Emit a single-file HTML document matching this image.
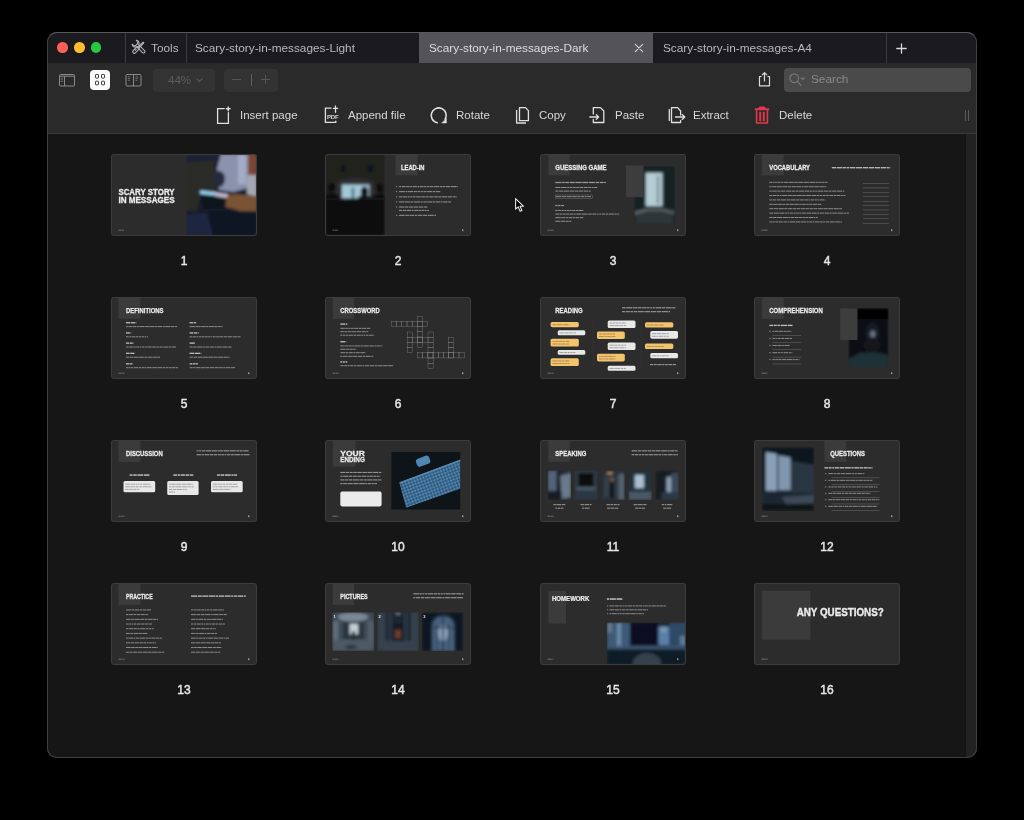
<!DOCTYPE html>
<html><head><meta charset="utf-8">
<style>
*{margin:0;padding:0;box-sizing:border-box}
html,body{width:1024px;height:820px;background:#000;overflow:hidden;font-family:"Liberation Sans",sans-serif}
body>*{will-change:transform}
.abs{position:absolute}
#win{position:absolute;left:47px;top:32px;width:930px;height:726px;border-radius:10px;background:#181818;overflow:hidden;box-shadow:inset 0 0 0 1px #48484a}
#tabs{position:absolute;left:0;top:0;width:930px;height:31px;background:#1b1a1f}
.dot{position:absolute;top:10.25px;width:10.5px;height:10.5px;border-radius:50%;margin-left:0.25px}
.vd{position:absolute;top:0;width:1px;height:31px;background:#3b3b3e}
.tt{position:absolute;top:8.5px;font-size:11.8px;color:#b9b8bd;white-space:nowrap}
#toolbar{position:absolute;left:0;top:31px;width:930px;height:71px;background:#2a2a2a;border-bottom:1px solid #3a3a3a}
.lbl{position:absolute;top:109px;font-size:11.5px;color:#d8d8d8;white-space:nowrap}
#content{position:absolute;left:0;top:102px;width:918px;height:624px;background:#161616}
#scroll{position:absolute;left:918px;top:102px;width:12px;height:624px;background:#222;border-left:1px solid #131313}
#winborder{position:absolute;left:47px;top:32px;width:930px;height:726px;border-radius:10px;border:1px solid #404042;border-top-color:#5a5a5c;pointer-events:none}
.pn{position:absolute;font-size:12px;margin-top:-0.5px;font-weight:normal;-webkit-text-stroke:0.45px #e6e6e6;color:#e6e6e6;width:40px;text-align:center}
.th{position:absolute;width:146px;height:82px;background:#2c2c2c;border-radius:3px;overflow:hidden}
.th::after{content:"";position:absolute;left:0;top:0;right:0;bottom:0;border:1px solid #3c3c3c;border-radius:3px}
.th svg{display:block}
</style></head>
<body>
<div id="win">
  <div id="tabs">
    <div class="dot" style="left:10px;background:#fe5f57"></div>
    <div class="dot" style="left:27px;background:#febc2e"></div>
    <div class="dot" style="left:43.5px;background:#28c840"></div>
    <div class="vd" style="left:78px"></div>
    <div class="vd" style="left:139px"></div>
    <div class="tt" style="left:104px">Tools</div>
    <div class="tt" style="left:148px">Scary-story-in-messages-Light</div>
    <div class="abs" style="left:372px;top:0;width:234px;height:31px;background:#545358"></div>
    <div class="tt" style="left:382px;color:#dddde0">Scary-story-in-messages-Dark</div>
    <div class="tt" style="left:616px">Scary-story-in-messages-A4</div>
    <div class="vd" style="left:839px"></div>
  </div>
  <div id="toolbar"></div>
  <div id="content"></div>
  <div id="scroll"></div>
</div>
<div id="winborder"></div>

<!-- tab icons -->
<svg class="abs" style="left:128px;top:36px" width="22" height="22" viewBox="0 0 22 22" fill="none" stroke="#b4b3b8" stroke-width="1.1" stroke-linejoin="round">
<g transform="rotate(-45 11 11)"><path d="M9.6 10.5 H12.4 V17.4 A1.4 1.4 0 0 1 9.6 17.4 Z"/><path d="M8.2 4.2 A3.1 3.1 0 0 0 9.6 9.2 V10.5 H12.4 V9.2 A3.1 3.1 0 0 0 13.8 4.2 V6.6 L12.2 7.6 H9.8 L8.2 6.6 Z"/></g>
<g transform="rotate(45 11 11)"><path d="M9.4 12.2 H12.6 V17.6 A1.6 1.6 0 0 1 9.4 17.6 Z"/><path d="M10.7 14 V16.4"/><path d="M10.4 12.2 V5.4 L11 4.2 L11.6 5.4 V12.2"/></g>
</svg>
<svg class="abs" style="left:633px;top:42px" width="12" height="12" viewBox="0 0 12 12" stroke="#cfcfd2" stroke-width="1.2" stroke-linecap="round"><path d="M2.3 2.4 L9.7 9.6 M9.7 2.4 L2.3 9.6"/></svg>
<svg class="abs" style="left:896px;top:42.5px" width="11" height="11" viewBox="0 0 11 11" stroke="#d6d6d9" stroke-width="1.3" stroke-linecap="round"><path d="M5.5 0.8 V10.2 M0.8 5.5 H10.2"/></svg>
<!-- view toggles -->
<svg class="abs" style="left:58px;top:73px" width="18" height="14" viewBox="0 0 18 14" fill="none" stroke="#8a8a8a" stroke-width="1"><rect x="1.5" y="1.5" width="15" height="11.5" rx="1"/><path d="M1.5 3.2 H16.5 M6.5 3.2 V13"/><path d="M2.8 5.2 H5 M2.8 6.8 H5 M2.8 8.4 H5" stroke-width="0.7"/></svg>
<div class="abs" style="left:90px;top:70px;width:20px;height:20px;border-radius:4px;background:#fafafa"></div>
<svg class="abs" style="left:95px;top:74px" width="10" height="12" viewBox="0 0 10 12" fill="none" stroke="#3a3a3a" stroke-width="1"><rect x="0.5" y="0.5" width="3" height="3.6" rx="0.6"/><rect x="6.5" y="0.5" width="3" height="3.6" rx="0.6"/><rect x="0.5" y="7.2" width="3" height="3.6" rx="0.6"/><rect x="6.5" y="7.2" width="3" height="3.6" rx="0.6"/></svg>
<svg class="abs" style="left:125px;top:73px" width="17" height="14" viewBox="0 0 17 14" fill="none" stroke="#8a8a8a" stroke-width="1"><rect x="1" y="1.5" width="15" height="11.5" rx="1"/><path d="M8.5 1.5 V13"/><path d="M2.8 3.8 H5.2 M2.8 5.6 H5.2 M2.8 7.4 H4.6 M10.4 3.8 H13 M10.4 5.6 H13 M10.4 7.4 H12.4" stroke-width="0.7"/></svg>
<div class="abs" style="left:153px;top:69px;width:62px;height:23px;border-radius:4px;background:#333"></div>
<div class="abs" style="left:168px;top:73.5px;font-size:11.5px;color:#5e5e5e">44%</div>
<svg class="abs" style="left:195px;top:77px" width="9" height="6" viewBox="0 0 9 6" fill="none" stroke="#585858" stroke-width="1.1"><path d="M1.5 1.5 L4.5 4.5 L7.5 1.5"/></svg>
<div class="abs" style="left:224px;top:69px;width:54px;height:23px;border-radius:4px;background:#333"></div>
<div class="abs" style="left:232px;top:78.5px;width:9px;height:1px;background:#555"></div>
<div class="abs" style="left:250.5px;top:74px;width:1.2px;height:12px;background:#606060"></div>
<div class="abs" style="left:261px;top:78.5px;width:9px;height:1px;background:#555"></div>
<div class="abs" style="left:265px;top:74.5px;width:1px;height:9px;background:#555"></div>
<!-- share + search -->
<svg class="abs" style="left:757px;top:71px" width="15" height="16" viewBox="0 0 15 16" fill="none" stroke="#dcdcdc" stroke-width="1.2" stroke-linejoin="round"><path d="M4.6 5.5 H2.5 V14.8 H12.5 V5.5 H10.4"/><path d="M7.5 10.5 V1.8 M5 4.2 L7.5 1.6 L10 4.2"/></svg>
<div class="abs" style="left:784px;top:68px;width:187px;height:24px;border-radius:4px;background:#4a4a4a"></div>
<svg class="abs" style="left:788px;top:72px" width="20" height="16" viewBox="0 0 20 16" fill="none" stroke="#7b7b7b" stroke-width="1.1" stroke-linecap="round"><circle cx="6.2" cy="6.3" r="4.3"/><path d="M9.3 9.4 L13 13.4 M13.2 5.8 L14.8 7.4 L16.4 5.8"/></svg>
<div class="abs" style="left:811px;top:72px;font-size:11.8px;color:#8a8a8a">Search</div>
<!-- actions -->
<svg class="abs" style="left:214px;top:104px" width="20" height="22" viewBox="0 0 20 22" fill="none" stroke="#e0e0e0" stroke-width="1.3" stroke-linecap="round"><path d="M10.2 4.6 H3.6 V19.4 H14.4 V8.6"/><path d="M14.2 2.9 V6.7 M12.3 4.8 H16.1" stroke-width="1.4"/></svg>
<div class="lbl" style="left:239.5px">Insert page</div>
<svg class="abs" style="left:322px;top:104px" width="20" height="22" viewBox="0 0 20 22" fill="none" stroke="#e0e0e0" stroke-width="1.3" stroke-linecap="round"><path d="M9 4.1 H3.4 V18.4 H13.8 V17.2"/><path d="M13.5 2 V8.3 M11.3 4.3 H15.7"/></svg>
<div class="abs" style="left:326.5px;top:113.5px;font-size:6px;font-weight:bold;color:#d8d8d8;letter-spacing:-0.2px">PDF</div>
<div class="lbl" style="left:347.5px">Append file</div>
<svg class="abs" style="left:428px;top:105px" width="22" height="22" viewBox="0 0 22 22" fill="none" stroke="#e0e0e0" stroke-width="1.6" stroke-linecap="round"><path d="M9.2 17.8 A7.5 7.5 0 1 1 17.2 14.2"/><path d="M14 18 L18.4 18 L18.4 13.6 Z" fill="#e0e0e0" stroke-width="0.5" stroke-linejoin="round"/></svg>
<div class="lbl" style="left:455.5px">Rotate</div>
<svg class="abs" style="left:514px;top:105px" width="18" height="21" viewBox="0 0 18 21" fill="none" stroke="#e0e0e0" stroke-width="1.3" stroke-linejoin="round"><path d="M5.5 2.6 H11.5 L14.4 5.6 V15.7 H5.5 Z"/><path d="M2.6 5 V18 H12"/></svg>
<div class="lbl" style="left:538.5px">Copy</div>
<svg class="abs" style="left:587px;top:105px" width="20" height="20" viewBox="0 0 20 20" fill="none" stroke="#e0e0e0" stroke-width="1.3" stroke-linejoin="round" stroke-linecap="round"><path d="M6.3 9 V2.6 H13.5 L16.8 6 V17.5 H6.3 V14.5"/><path d="M2.8 12 H11.5 M9.3 9.8 L11.6 12 L9.3 14.2"/></svg>
<div class="lbl" style="left:615px">Paste</div>
<svg class="abs" style="left:666px;top:105px" width="22" height="20" viewBox="0 0 22 20" fill="none" stroke="#e0e0e0" stroke-width="1.3" stroke-linejoin="round" stroke-linecap="round"><path d="M3.3 4.6 V15.4"/><path d="M14.6 10 V6 L11.6 2.6 H5.5 V17.5 H14.6 V15.5"/><path d="M9.5 12 H18.6 M16.2 9.6 L18.8 12 L16.2 14.4"/></svg>
<div class="lbl" style="left:693px">Extract</div>
<svg class="abs" style="left:753px;top:105px" width="18" height="20" viewBox="0 0 18 20" fill="none" stroke="#df3a4b" stroke-width="1.6" stroke-linejoin="round"><path d="M1.8 4.2 H16.2 M6 4.2 L6.8 2.4 H11.2 L12 4.2" stroke-width="1.9"/><path d="M3.6 5.2 V18 H14.4 V5.2"/><rect x="6.2" y="6.7" width="2" height="9.6" fill="#df3a4b" stroke="none"/><rect x="9.8" y="6.7" width="2" height="9.6" fill="#df3a4b" stroke="none"/></svg>
<div class="lbl" style="left:779px">Delete</div>
<div class="abs" style="left:965px;top:110px;width:1px;height:11px;background:#5a5a5a"></div>
<div class="abs" style="left:968px;top:110px;width:1px;height:11px;background:#5a5a5a"></div>

<!--THUMBS-->
<div class="th" style="left:110.7px;top:154px"><svg width="146" height="82" viewBox="0 0 146 82" font-family="Liberation Sans, sans-serif"><defs><filter id="bl0" x="-5%" y="-5%" width="110%" height="110%"><feGaussianBlur stdDeviation="1.5"/></filter></defs><rect x="0" y="0" width="146" height="82" fill="#2c2c2c" /><clipPath id="cp1"><rect x="75" y="0" width="71" height="82"/></clipPath><g clip-path="url(#cp1)"><g filter="url(#bl0)"><rect x="75" y="0" width="71" height="82" fill="#121a2a" /><rect x="75" y="0" width="36" height="9" fill="#1a2236" /><polygon points="75,9 103,6 106,38 90,40 86,57 75,60" fill="#2b2b28"/><polygon points="110,0 137,0 137,34 122,38 108,36 106,14" fill="#8a92ae"/><rect x="127" y="0" width="8" height="30" fill="#a4acc6" /><rect x="137" y="0" width="9" height="21" fill="#7a4430" /><polygon points="136,21 146,21 146,44 136,40" fill="#a4a8b4"/><polygon points="136,42 146,44 146,52 138,50" fill="#4a4a50"/><ellipse cx="108" cy="25" rx="6" ry="8" fill="#262c3c"/><polygon points="106,43 124,40 146,42 146,62 126,56 112,52" fill="#7a5236"/><polygon points="89,38 116,42 114,54 93,55" fill="#0e121c"/><polygon points="89,36.5 106,38.5 105.5,41.5 89.5,40" fill="#a0dcf8"/><polygon points="104,38.5 117,40 116,44 104,42" fill="#c8c0d4"/><rect x="75" y="57" width="71" height="25" fill="#0c1322" /><polygon points="75,60 96,58 102,82 75,82" fill="#1a2640"/></g></g><text x="7.4" y="40.6" font-size="9.2" font-weight="bold" fill="#ececec" stroke="#ececec" stroke-width="0.32" textLength="56.2" lengthAdjust="spacingAndGlyphs">SCARY STORY</text><text x="7.4" y="48.5" font-size="9.2" font-weight="bold" fill="#ececec" stroke="#ececec" stroke-width="0.32" textLength="56.2" lengthAdjust="spacingAndGlyphs">IN MESSAGES</text><g opacity="0.68"><rect x="7.50" y="75.71" width="2.74" height="0.91" fill="#9a9a9a"/><rect x="10.73" y="75.71" width="2.12" height="0.91" fill="#9a9a9a"/></g></svg></div>
<div class="pn" style="left:163.7px;top:254px">1</div>
<div class="th" style="left:325.2px;top:154px"><svg width="146" height="82" viewBox="0 0 146 82" font-family="Liberation Sans, sans-serif"><defs><filter id="bl1" x="-5%" y="-5%" width="110%" height="110%"><feGaussianBlur stdDeviation="1.5"/></filter></defs><rect x="0" y="0" width="146" height="82" fill="#2c2c2c" /><clipPath id="cp2"><rect x="0" y="0" width="60" height="82"/></clipPath><g clip-path="url(#cp2)"><g filter="url(#bl1)"><rect x="0" y="0" width="60" height="82" fill="#24211f" /><ellipse cx="30" cy="38" rx="24" ry="14" fill="#2e2e32"/><rect x="0" y="45" width="60" height="37" fill="#0a0a0a" /><rect x="15.4" y="10.8" width="5.4" height="7.2" fill="#10161e" /><rect x="42.8" y="10.8" width="5.4" height="7.2" fill="#10161e" /><rect x="17" y="30.6" width="27.4" height="13.7" fill="#a4c8d8" /><ellipse cx="28" cy="36" rx="1.6" ry="3" fill="#5a7a88"/><rect x="26.6" y="37" width="2.8" height="7" fill="#5a7a88" /><ellipse cx="7" cy="33.5" rx="4" ry="4.8" fill="#0c0c0c"/><path d="M0,45 V41 Q7,36 14,41 V45 Z" fill="#101010"/><ellipse cx="39.5" cy="37.5" rx="3.8" ry="5" fill="#0c0c0c"/><path d="M33,45 V43 Q39.5,38 46,43 V45 Z" fill="#101010"/><ellipse cx="54.5" cy="34" rx="4" ry="4.8" fill="#0c0c0c"/><path d="M47,45 V42 Q54,37 60,41 V45 Z" fill="#101010"/><rect x="0" y="44.5" width="60" height="2" fill="#181818" /></g></g><rect x="70.6" y="0" width="22.1" height="21.4" fill="#3b3b3b" /><text x="76" y="16" font-size="7.6" font-weight="bold" fill="#ececec" stroke="#ececec" stroke-width="0.27" textLength="23.5" lengthAdjust="spacingAndGlyphs">LEAD-IN</text><g opacity="0.68"><rect x="71.00" y="32.10" width="1.20" height="1.06" fill="#bdbdbd"/></g><g opacity="0.68"><rect x="74.00" y="32.10" width="2.13" height="1.06" fill="#bdbdbd"/><rect x="76.70" y="32.10" width="4.04" height="1.06" fill="#bdbdbd"/><rect x="81.32" y="32.10" width="3.34" height="1.06" fill="#bdbdbd"/><rect x="85.23" y="32.10" width="2.07" height="1.06" fill="#bdbdbd"/><rect x="87.88" y="32.10" width="3.93" height="1.06" fill="#bdbdbd"/><rect x="92.38" y="32.10" width="1.99" height="1.06" fill="#bdbdbd"/><rect x="94.94" y="32.10" width="3.62" height="1.06" fill="#bdbdbd"/><rect x="99.13" y="32.10" width="2.12" height="1.06" fill="#bdbdbd"/><rect x="101.82" y="32.10" width="2.21" height="1.06" fill="#bdbdbd"/><rect x="104.60" y="32.10" width="3.58" height="1.06" fill="#bdbdbd"/><rect x="108.76" y="32.10" width="5.24" height="1.06" fill="#bdbdbd"/><rect x="114.58" y="32.10" width="2.34" height="1.06" fill="#bdbdbd"/><rect x="117.49" y="32.10" width="2.75" height="1.06" fill="#bdbdbd"/><rect x="120.82" y="32.10" width="4.42" height="1.06" fill="#bdbdbd"/><rect x="125.81" y="32.10" width="5.74" height="1.06" fill="#bdbdbd"/><rect x="132.13" y="32.10" width="0.87" height="1.06" fill="#bdbdbd"/></g><g opacity="0.68"><rect x="71.00" y="37.10" width="1.20" height="1.06" fill="#bdbdbd"/></g><g opacity="0.68"><rect x="74.00" y="37.10" width="5.86" height="1.06" fill="#bdbdbd"/><rect x="80.43" y="37.10" width="2.03" height="1.06" fill="#bdbdbd"/><rect x="83.03" y="37.10" width="5.37" height="1.06" fill="#bdbdbd"/><rect x="88.98" y="37.10" width="3.03" height="1.06" fill="#bdbdbd"/><rect x="92.58" y="37.10" width="2.43" height="1.06" fill="#bdbdbd"/><rect x="95.58" y="37.10" width="2.32" height="1.06" fill="#bdbdbd"/><rect x="98.47" y="37.10" width="3.11" height="1.06" fill="#bdbdbd"/><rect x="102.15" y="37.10" width="5.20" height="1.06" fill="#bdbdbd"/><rect x="107.92" y="37.10" width="2.58" height="1.06" fill="#bdbdbd"/><rect x="111.07" y="37.10" width="4.23" height="1.06" fill="#bdbdbd"/></g><g opacity="0.68"><rect x="71.00" y="42.30" width="1.20" height="1.06" fill="#bdbdbd"/></g><g opacity="0.68"><rect x="74.00" y="42.30" width="3.37" height="1.06" fill="#bdbdbd"/><rect x="77.94" y="42.30" width="4.09" height="1.06" fill="#bdbdbd"/><rect x="82.61" y="42.30" width="2.09" height="1.06" fill="#bdbdbd"/><rect x="85.27" y="42.30" width="2.08" height="1.06" fill="#bdbdbd"/><rect x="87.92" y="42.30" width="2.68" height="1.06" fill="#bdbdbd"/><rect x="91.18" y="42.30" width="4.64" height="1.06" fill="#bdbdbd"/><rect x="96.39" y="42.30" width="3.60" height="1.06" fill="#bdbdbd"/><rect x="100.56" y="42.30" width="3.13" height="1.06" fill="#bdbdbd"/><rect x="104.26" y="42.30" width="4.25" height="1.06" fill="#bdbdbd"/><rect x="109.08" y="42.30" width="3.70" height="1.06" fill="#bdbdbd"/><rect x="113.35" y="42.30" width="3.07" height="1.06" fill="#bdbdbd"/><rect x="117.00" y="42.30" width="5.11" height="1.06" fill="#bdbdbd"/><rect x="122.68" y="42.30" width="4.72" height="1.06" fill="#bdbdbd"/><rect x="127.97" y="42.30" width="2.84" height="1.06" fill="#bdbdbd"/><rect x="131.38" y="42.30" width="0.62" height="1.06" fill="#bdbdbd"/></g><g opacity="0.68"><rect x="71.00" y="47.40" width="1.20" height="1.06" fill="#bdbdbd"/></g><g opacity="0.68"><rect x="74.00" y="47.40" width="5.44" height="1.06" fill="#bdbdbd"/><rect x="80.02" y="47.40" width="4.84" height="1.06" fill="#bdbdbd"/><rect x="85.43" y="47.40" width="3.02" height="1.06" fill="#bdbdbd"/><rect x="89.02" y="47.40" width="5.88" height="1.06" fill="#bdbdbd"/><rect x="95.47" y="47.40" width="2.32" height="1.06" fill="#bdbdbd"/><rect x="98.36" y="47.40" width="3.56" height="1.06" fill="#bdbdbd"/><rect x="102.49" y="47.40" width="4.96" height="1.06" fill="#bdbdbd"/><rect x="108.02" y="47.40" width="2.46" height="1.06" fill="#bdbdbd"/><rect x="111.05" y="47.40" width="3.85" height="1.06" fill="#bdbdbd"/><rect x="115.48" y="47.40" width="2.00" height="1.06" fill="#bdbdbd"/><rect x="118.04" y="47.40" width="4.59" height="1.06" fill="#bdbdbd"/><rect x="123.21" y="47.40" width="2.79" height="1.06" fill="#bdbdbd"/></g><g opacity="0.68"><rect x="71.00" y="52.50" width="1.20" height="1.06" fill="#bdbdbd"/></g><g opacity="0.68"><rect x="74.00" y="52.50" width="5.44" height="1.06" fill="#bdbdbd"/><rect x="80.02" y="52.50" width="3.13" height="1.06" fill="#bdbdbd"/><rect x="83.72" y="52.50" width="4.70" height="1.06" fill="#bdbdbd"/><rect x="88.99" y="52.50" width="4.29" height="1.06" fill="#bdbdbd"/><rect x="93.85" y="52.50" width="4.23" height="1.06" fill="#bdbdbd"/><rect x="98.64" y="52.50" width="3.72" height="1.06" fill="#bdbdbd"/></g><g opacity="0.68"><rect x="71.00" y="60.80" width="1.20" height="1.06" fill="#bdbdbd"/></g><g opacity="0.68"><rect x="74.00" y="60.80" width="5.73" height="1.06" fill="#bdbdbd"/><rect x="80.30" y="60.80" width="3.79" height="1.06" fill="#bdbdbd"/><rect x="84.66" y="60.80" width="4.57" height="1.06" fill="#bdbdbd"/><rect x="89.81" y="60.80" width="2.08" height="1.06" fill="#bdbdbd"/><rect x="92.46" y="60.80" width="4.73" height="1.06" fill="#bdbdbd"/><rect x="97.76" y="60.80" width="4.50" height="1.06" fill="#bdbdbd"/><rect x="102.84" y="60.80" width="5.93" height="1.06" fill="#bdbdbd"/><rect x="109.34" y="60.80" width="1.66" height="1.06" fill="#bdbdbd"/></g><g opacity="0.68"><rect x="74.00" y="55.90" width="3.01" height="1.06" fill="#bdbdbd"/><rect x="77.58" y="55.90" width="3.42" height="1.06" fill="#bdbdbd"/><rect x="81.58" y="55.90" width="4.59" height="1.06" fill="#bdbdbd"/><rect x="86.74" y="55.90" width="1.93" height="1.06" fill="#bdbdbd"/><rect x="89.24" y="55.90" width="3.74" height="1.06" fill="#bdbdbd"/><rect x="93.55" y="55.90" width="2.53" height="1.06" fill="#bdbdbd"/><rect x="96.65" y="55.90" width="2.32" height="1.06" fill="#bdbdbd"/><rect x="99.53" y="55.90" width="2.08" height="1.06" fill="#bdbdbd"/><rect x="102.18" y="55.90" width="1.82" height="1.06" fill="#bdbdbd"/></g><g opacity="0.68"><rect x="7.50" y="75.71" width="2.04" height="0.91" fill="#9a9a9a"/><rect x="10.04" y="75.71" width="2.47" height="0.91" fill="#9a9a9a"/><rect x="13.00" y="75.71" width="0.50" height="0.91" fill="#9a9a9a"/></g><rect x="137" y="75.3" width="1.4" height="1.8" fill="#9a9a9a" /></svg></div>
<div class="pn" style="left:378.2px;top:254px">2</div>
<div class="th" style="left:539.7px;top:154px"><svg width="146" height="82" viewBox="0 0 146 82" font-family="Liberation Sans, sans-serif"><defs><filter id="bl2" x="-5%" y="-5%" width="110%" height="110%"><feGaussianBlur stdDeviation="1.5"/></filter></defs><rect x="0" y="0" width="146" height="82" fill="#2c2c2c" /><rect x="8.3" y="0" width="21.4" height="21.4" fill="#3b3b3b" /><text x="15.3" y="16" font-size="7.6" font-weight="bold" fill="#ececec" stroke="#ececec" stroke-width="0.27" textLength="51.3" lengthAdjust="spacingAndGlyphs">GUESSING GAME</text><g opacity="0.68"><rect x="15.30" y="27.90" width="6.17" height="1.20" fill="#d0d0d0"/><rect x="22.12" y="27.90" width="2.46" height="1.20" fill="#d0d0d0"/><rect x="25.23" y="27.90" width="4.19" height="1.20" fill="#d0d0d0"/><rect x="30.07" y="27.90" width="4.66" height="1.20" fill="#d0d0d0"/><rect x="35.38" y="27.90" width="6.22" height="1.20" fill="#d0d0d0"/><rect x="42.25" y="27.90" width="5.92" height="1.20" fill="#d0d0d0"/><rect x="48.82" y="27.90" width="6.13" height="1.20" fill="#d0d0d0"/><rect x="55.61" y="27.90" width="3.39" height="1.20" fill="#d0d0d0"/><rect x="59.65" y="27.90" width="4.03" height="1.20" fill="#d0d0d0"/><rect x="64.33" y="27.90" width="1.67" height="1.20" fill="#d0d0d0"/></g><g opacity="0.68"><rect x="15.30" y="32.97" width="5.23" height="1.01" fill="#bdbdbd"/><rect x="21.08" y="32.97" width="5.52" height="1.01" fill="#bdbdbd"/><rect x="27.14" y="32.97" width="2.34" height="1.01" fill="#bdbdbd"/><rect x="30.03" y="32.97" width="2.44" height="1.01" fill="#bdbdbd"/><rect x="33.02" y="32.97" width="2.66" height="1.01" fill="#bdbdbd"/><rect x="36.23" y="32.97" width="2.67" height="1.01" fill="#bdbdbd"/><rect x="39.45" y="32.97" width="3.66" height="1.01" fill="#bdbdbd"/><rect x="43.65" y="32.97" width="4.07" height="1.01" fill="#bdbdbd"/><rect x="48.27" y="32.97" width="2.78" height="1.01" fill="#bdbdbd"/><rect x="51.60" y="32.97" width="1.77" height="1.01" fill="#bdbdbd"/><rect x="53.91" y="32.97" width="3.39" height="1.01" fill="#bdbdbd"/></g><g opacity="0.68"><rect x="15.30" y="36.57" width="3.20" height="1.01" fill="#bdbdbd"/><rect x="19.05" y="36.57" width="3.98" height="1.01" fill="#bdbdbd"/><rect x="23.58" y="36.57" width="5.50" height="1.01" fill="#bdbdbd"/><rect x="29.62" y="36.57" width="4.47" height="1.01" fill="#bdbdbd"/><rect x="34.64" y="36.57" width="3.78" height="1.01" fill="#bdbdbd"/><rect x="38.97" y="36.57" width="4.18" height="1.01" fill="#bdbdbd"/><rect x="43.69" y="36.57" width="4.41" height="1.01" fill="#bdbdbd"/><rect x="48.65" y="36.57" width="1.96" height="1.01" fill="#bdbdbd"/></g><rect x="15.3" y="41" width="37.2" height="3.5" fill="none" stroke="#a0a0a0" stroke-width="0.3"/><g opacity="0.68"><rect x="16.00" y="42.14" width="5.04" height="0.96" fill="#bdbdbd"/><rect x="21.56" y="42.14" width="4.59" height="0.96" fill="#bdbdbd"/><rect x="26.67" y="42.14" width="4.95" height="0.96" fill="#bdbdbd"/><rect x="32.14" y="42.14" width="4.66" height="0.96" fill="#bdbdbd"/><rect x="37.32" y="42.14" width="3.14" height="0.96" fill="#bdbdbd"/><rect x="40.97" y="42.14" width="3.16" height="0.96" fill="#bdbdbd"/><rect x="44.66" y="42.14" width="2.05" height="0.96" fill="#bdbdbd"/><rect x="47.23" y="42.14" width="3.77" height="0.96" fill="#bdbdbd"/></g><g opacity="0.68"><rect x="15.30" y="50.97" width="2.28" height="1.15" fill="#d0d0d0"/><rect x="18.20" y="50.97" width="2.30" height="1.15" fill="#d0d0d0"/><rect x="21.13" y="50.97" width="2.94" height="1.15" fill="#d0d0d0"/></g><g opacity="0.68"><rect x="15.30" y="55.97" width="2.39" height="1.01" fill="#bdbdbd"/><rect x="18.24" y="55.97" width="3.09" height="1.01" fill="#bdbdbd"/><rect x="21.87" y="55.97" width="1.96" height="1.01" fill="#bdbdbd"/><rect x="24.37" y="55.97" width="1.75" height="1.01" fill="#bdbdbd"/><rect x="26.67" y="55.97" width="2.35" height="1.01" fill="#bdbdbd"/><rect x="29.56" y="55.97" width="2.15" height="1.01" fill="#bdbdbd"/><rect x="32.26" y="55.97" width="3.18" height="1.01" fill="#bdbdbd"/><rect x="35.98" y="55.97" width="1.85" height="1.01" fill="#bdbdbd"/><rect x="38.38" y="55.97" width="4.92" height="1.01" fill="#bdbdbd"/></g><g opacity="0.68"><rect x="15.30" y="59.57" width="4.17" height="1.01" fill="#bdbdbd"/><rect x="20.01" y="59.57" width="2.33" height="1.01" fill="#bdbdbd"/><rect x="22.89" y="59.57" width="2.74" height="1.01" fill="#bdbdbd"/><rect x="26.18" y="59.57" width="3.12" height="1.01" fill="#bdbdbd"/><rect x="29.85" y="59.57" width="3.18" height="1.01" fill="#bdbdbd"/><rect x="33.58" y="59.57" width="2.23" height="1.01" fill="#bdbdbd"/><rect x="36.36" y="59.57" width="5.09" height="1.01" fill="#bdbdbd"/><rect x="42.00" y="59.57" width="5.66" height="1.01" fill="#bdbdbd"/><rect x="48.20" y="59.57" width="3.58" height="1.01" fill="#bdbdbd"/><rect x="52.33" y="59.57" width="3.66" height="1.01" fill="#bdbdbd"/><rect x="56.53" y="59.57" width="2.09" height="1.01" fill="#bdbdbd"/><rect x="59.17" y="59.57" width="2.15" height="1.01" fill="#bdbdbd"/><rect x="61.87" y="59.57" width="3.10" height="1.01" fill="#bdbdbd"/><rect x="65.51" y="59.57" width="2.79" height="1.01" fill="#bdbdbd"/><rect x="68.85" y="59.57" width="5.01" height="1.01" fill="#bdbdbd"/><rect x="74.41" y="59.57" width="2.39" height="1.01" fill="#bdbdbd"/><rect x="77.34" y="59.57" width="1.84" height="1.01" fill="#bdbdbd"/></g><g opacity="0.68"><rect x="15.30" y="63.17" width="5.49" height="1.01" fill="#bdbdbd"/><rect x="21.34" y="63.17" width="3.83" height="1.01" fill="#bdbdbd"/><rect x="25.72" y="63.17" width="2.33" height="1.01" fill="#bdbdbd"/><rect x="28.59" y="63.17" width="3.89" height="1.01" fill="#bdbdbd"/><rect x="33.02" y="63.17" width="1.86" height="1.01" fill="#bdbdbd"/><rect x="35.43" y="63.17" width="3.83" height="1.01" fill="#bdbdbd"/><rect x="39.80" y="63.17" width="3.50" height="1.01" fill="#bdbdbd"/></g><g opacity="0.68"><rect x="15.30" y="66.77" width="5.15" height="1.01" fill="#bdbdbd"/><rect x="21.00" y="66.77" width="4.49" height="1.01" fill="#bdbdbd"/><rect x="26.03" y="66.77" width="2.78" height="1.01" fill="#bdbdbd"/><rect x="29.36" y="66.77" width="1.94" height="1.01" fill="#bdbdbd"/></g><clipPath id="cp3"><rect x="94.3" y="11.9" width="40.6" height="58.7"/></clipPath><g clip-path="url(#cp3)"><g filter="url(#bl2)"><rect x="94.3" y="11.9" width="40.6" height="58.7" fill="#182022" /><rect x="96" y="56" width="37" height="14" fill="#2e3638" /><polygon points="94.3,58 108,54 121,54 134.9,58 134.9,60 121,57 108,57 94.3,61" fill="#5a6466"/><rect x="104" y="17" width="20" height="38" fill="#26343a" /><rect x="105.8" y="19" width="16.5" height="33" fill="#b4ccd4" /><rect x="117" y="22" width="2" height="28" fill="#6a8088" /></g></g><rect x="86" y="11.4" width="17.6" height="31.8" fill="#3d3d3d" /><g opacity="0.68"><rect x="7.50" y="75.71" width="2.18" height="0.91" fill="#9a9a9a"/><rect x="10.17" y="75.71" width="3.33" height="0.91" fill="#9a9a9a"/></g><rect x="137" y="75.3" width="1.4" height="1.8" fill="#9a9a9a" /></svg></div>
<div class="pn" style="left:592.7px;top:254px">3</div>
<div class="th" style="left:754.2px;top:154px"><svg width="146" height="82" viewBox="0 0 146 82" font-family="Liberation Sans, sans-serif"><defs><filter id="bl3" x="-5%" y="-5%" width="110%" height="110%"><feGaussianBlur stdDeviation="1.5"/></filter></defs><rect x="0" y="0" width="146" height="82" fill="#2c2c2c" /><rect x="7.8" y="0" width="21.9" height="21.4" fill="#3b3b3b" /><text x="15.3" y="16" font-size="7.6" font-weight="bold" fill="#ececec" stroke="#ececec" stroke-width="0.27" textLength="40.7" lengthAdjust="spacingAndGlyphs">VOCABULARY</text><g opacity="0.85"><rect x="77.80" y="13.04" width="4.21" height="1.33" fill="#d0d0d0"/><rect x="82.61" y="13.04" width="5.28" height="1.33" fill="#d0d0d0"/><rect x="88.49" y="13.04" width="3.34" height="1.33" fill="#d0d0d0"/><rect x="92.42" y="13.04" width="2.88" height="1.33" fill="#d0d0d0"/><rect x="95.90" y="13.04" width="5.42" height="1.33" fill="#d0d0d0"/><rect x="101.91" y="13.04" width="6.16" height="1.33" fill="#d0d0d0"/><rect x="108.68" y="13.04" width="5.59" height="1.33" fill="#d0d0d0"/><rect x="114.87" y="13.04" width="5.39" height="1.33" fill="#d0d0d0"/><rect x="120.86" y="13.04" width="5.45" height="1.33" fill="#d0d0d0"/><rect x="126.90" y="13.04" width="5.11" height="1.33" fill="#d0d0d0"/><rect x="132.61" y="13.04" width="2.89" height="1.33" fill="#d0d0d0"/><rect x="136.10" y="13.04" width="0.30" height="1.33" fill="#d0d0d0"/></g><g opacity="0.68"><rect x="15.30" y="27.84" width="3.00" height="0.96" fill="#bdbdbd"/><rect x="18.82" y="27.84" width="1.78" height="0.96" fill="#bdbdbd"/><rect x="21.12" y="27.84" width="1.77" height="0.96" fill="#bdbdbd"/><rect x="23.41" y="27.84" width="2.71" height="0.96" fill="#bdbdbd"/><rect x="26.64" y="27.84" width="2.64" height="0.96" fill="#bdbdbd"/><rect x="29.80" y="27.84" width="4.26" height="0.96" fill="#bdbdbd"/><rect x="34.58" y="27.84" width="5.25" height="0.96" fill="#bdbdbd"/><rect x="40.36" y="27.84" width="3.34" height="0.96" fill="#bdbdbd"/><rect x="44.22" y="27.84" width="5.18" height="0.96" fill="#bdbdbd"/><rect x="49.92" y="27.84" width="5.37" height="0.96" fill="#bdbdbd"/><rect x="55.81" y="27.84" width="5.25" height="0.96" fill="#bdbdbd"/><rect x="61.58" y="27.84" width="3.03" height="0.96" fill="#bdbdbd"/><rect x="65.14" y="27.84" width="2.49" height="0.96" fill="#bdbdbd"/><rect x="68.15" y="27.84" width="2.52" height="0.96" fill="#bdbdbd"/><rect x="71.19" y="27.84" width="2.40" height="0.96" fill="#bdbdbd"/></g><rect x="109" y="29.4" width="25.8" height="0.35" fill="#8a8a8a" /><g opacity="0.68"><rect x="15.30" y="32.24" width="2.43" height="0.96" fill="#bdbdbd"/><rect x="18.25" y="32.24" width="4.01" height="0.96" fill="#bdbdbd"/><rect x="22.78" y="32.24" width="5.04" height="0.96" fill="#bdbdbd"/><rect x="28.34" y="32.24" width="4.82" height="0.96" fill="#bdbdbd"/><rect x="33.68" y="32.24" width="3.46" height="0.96" fill="#bdbdbd"/><rect x="37.67" y="32.24" width="4.12" height="0.96" fill="#bdbdbd"/><rect x="42.30" y="32.24" width="4.67" height="0.96" fill="#bdbdbd"/><rect x="47.49" y="32.24" width="1.98" height="0.96" fill="#bdbdbd"/><rect x="49.99" y="32.24" width="4.14" height="0.96" fill="#bdbdbd"/><rect x="54.65" y="32.24" width="5.08" height="0.96" fill="#bdbdbd"/><rect x="60.25" y="32.24" width="4.60" height="0.96" fill="#bdbdbd"/><rect x="65.37" y="32.24" width="4.48" height="0.96" fill="#bdbdbd"/><rect x="70.37" y="32.24" width="1.93" height="0.96" fill="#bdbdbd"/></g><rect x="109" y="33.800000000000004" width="25.8" height="0.35" fill="#8a8a8a" /><g opacity="0.68"><rect x="15.30" y="36.64" width="2.34" height="0.96" fill="#bdbdbd"/><rect x="18.16" y="36.64" width="4.63" height="0.96" fill="#bdbdbd"/><rect x="23.30" y="36.64" width="2.91" height="0.96" fill="#bdbdbd"/><rect x="26.74" y="36.64" width="4.67" height="0.96" fill="#bdbdbd"/><rect x="31.93" y="36.64" width="5.31" height="0.96" fill="#bdbdbd"/><rect x="37.76" y="36.64" width="3.15" height="0.96" fill="#bdbdbd"/><rect x="41.43" y="36.64" width="3.17" height="0.96" fill="#bdbdbd"/><rect x="45.12" y="36.64" width="5.22" height="0.96" fill="#bdbdbd"/><rect x="50.86" y="36.64" width="4.38" height="0.96" fill="#bdbdbd"/><rect x="55.76" y="36.64" width="2.30" height="0.96" fill="#bdbdbd"/><rect x="58.58" y="36.64" width="2.14" height="0.96" fill="#bdbdbd"/><rect x="61.25" y="36.64" width="2.23" height="0.96" fill="#bdbdbd"/><rect x="64.00" y="36.64" width="5.06" height="0.96" fill="#bdbdbd"/><rect x="69.58" y="36.64" width="4.69" height="0.96" fill="#bdbdbd"/><rect x="74.79" y="36.64" width="2.21" height="0.96" fill="#bdbdbd"/><rect x="77.53" y="36.64" width="4.77" height="0.96" fill="#bdbdbd"/><rect x="82.81" y="36.64" width="5.34" height="0.96" fill="#bdbdbd"/><rect x="88.68" y="36.64" width="1.62" height="0.96" fill="#bdbdbd"/></g><rect x="109" y="38.2" width="25.8" height="0.35" fill="#8a8a8a" /><g opacity="0.68"><rect x="15.30" y="41.04" width="2.98" height="0.96" fill="#bdbdbd"/><rect x="18.80" y="41.04" width="3.72" height="0.96" fill="#bdbdbd"/><rect x="23.04" y="41.04" width="2.16" height="0.96" fill="#bdbdbd"/><rect x="25.72" y="41.04" width="1.72" height="0.96" fill="#bdbdbd"/><rect x="27.96" y="41.04" width="5.31" height="0.96" fill="#bdbdbd"/><rect x="33.79" y="41.04" width="4.10" height="0.96" fill="#bdbdbd"/><rect x="38.41" y="41.04" width="3.64" height="0.96" fill="#bdbdbd"/><rect x="42.57" y="41.04" width="5.17" height="0.96" fill="#bdbdbd"/><rect x="48.26" y="41.04" width="3.29" height="0.96" fill="#bdbdbd"/><rect x="52.08" y="41.04" width="4.94" height="0.96" fill="#bdbdbd"/><rect x="57.53" y="41.04" width="4.76" height="0.96" fill="#bdbdbd"/><rect x="62.82" y="41.04" width="2.46" height="0.96" fill="#bdbdbd"/><rect x="65.79" y="41.04" width="2.61" height="0.96" fill="#bdbdbd"/><rect x="68.93" y="41.04" width="2.77" height="0.96" fill="#bdbdbd"/><rect x="72.21" y="41.04" width="2.57" height="0.96" fill="#bdbdbd"/><rect x="75.30" y="41.04" width="3.87" height="0.96" fill="#bdbdbd"/><rect x="79.69" y="41.04" width="2.64" height="0.96" fill="#bdbdbd"/><rect x="82.84" y="41.04" width="3.24" height="0.96" fill="#bdbdbd"/><rect x="86.60" y="41.04" width="2.16" height="0.96" fill="#bdbdbd"/><rect x="89.28" y="41.04" width="2.02" height="0.96" fill="#bdbdbd"/></g><rect x="109" y="42.6" width="25.8" height="0.35" fill="#8a8a8a" /><g opacity="0.68"><rect x="15.30" y="45.44" width="2.99" height="0.96" fill="#bdbdbd"/><rect x="18.81" y="45.44" width="3.38" height="0.96" fill="#bdbdbd"/><rect x="22.72" y="45.44" width="3.85" height="0.96" fill="#bdbdbd"/><rect x="27.09" y="45.44" width="5.06" height="0.96" fill="#bdbdbd"/><rect x="32.67" y="45.44" width="3.24" height="0.96" fill="#bdbdbd"/><rect x="36.43" y="45.44" width="5.11" height="0.96" fill="#bdbdbd"/><rect x="42.06" y="45.44" width="3.55" height="0.96" fill="#bdbdbd"/><rect x="46.13" y="45.44" width="3.66" height="0.96" fill="#bdbdbd"/><rect x="50.31" y="45.44" width="3.63" height="0.96" fill="#bdbdbd"/><rect x="54.46" y="45.44" width="1.74" height="0.96" fill="#bdbdbd"/><rect x="56.72" y="45.44" width="3.32" height="0.96" fill="#bdbdbd"/><rect x="60.55" y="45.44" width="2.35" height="0.96" fill="#bdbdbd"/><rect x="63.43" y="45.44" width="1.68" height="0.96" fill="#bdbdbd"/><rect x="65.63" y="45.44" width="4.66" height="0.96" fill="#bdbdbd"/><rect x="70.81" y="45.44" width="0.49" height="0.96" fill="#bdbdbd"/></g><rect x="109" y="47.0" width="25.8" height="0.35" fill="#8a8a8a" /><g opacity="0.68"><rect x="15.30" y="49.84" width="3.44" height="0.96" fill="#bdbdbd"/><rect x="19.26" y="49.84" width="4.39" height="0.96" fill="#bdbdbd"/><rect x="24.17" y="49.84" width="3.75" height="0.96" fill="#bdbdbd"/><rect x="28.44" y="49.84" width="2.89" height="0.96" fill="#bdbdbd"/><rect x="31.85" y="49.84" width="3.61" height="0.96" fill="#bdbdbd"/><rect x="35.98" y="49.84" width="3.75" height="0.96" fill="#bdbdbd"/><rect x="40.25" y="49.84" width="4.61" height="0.96" fill="#bdbdbd"/><rect x="45.38" y="49.84" width="2.06" height="0.96" fill="#bdbdbd"/><rect x="47.96" y="49.84" width="3.77" height="0.96" fill="#bdbdbd"/><rect x="52.25" y="49.84" width="2.60" height="0.96" fill="#bdbdbd"/><rect x="55.37" y="49.84" width="2.71" height="0.96" fill="#bdbdbd"/><rect x="58.59" y="49.84" width="4.56" height="0.96" fill="#bdbdbd"/><rect x="63.68" y="49.84" width="3.57" height="0.96" fill="#bdbdbd"/></g><rect x="109" y="51.400000000000006" width="25.8" height="0.35" fill="#8a8a8a" /><g opacity="0.68"><rect x="15.30" y="54.24" width="3.77" height="0.96" fill="#bdbdbd"/><rect x="19.59" y="54.24" width="4.52" height="0.96" fill="#bdbdbd"/><rect x="24.63" y="54.24" width="5.09" height="0.96" fill="#bdbdbd"/><rect x="30.24" y="54.24" width="3.33" height="0.96" fill="#bdbdbd"/><rect x="34.09" y="54.24" width="3.96" height="0.96" fill="#bdbdbd"/><rect x="38.57" y="54.24" width="3.56" height="0.96" fill="#bdbdbd"/><rect x="42.65" y="54.24" width="3.59" height="0.96" fill="#bdbdbd"/><rect x="46.76" y="54.24" width="4.26" height="0.96" fill="#bdbdbd"/><rect x="51.54" y="54.24" width="3.36" height="0.96" fill="#bdbdbd"/><rect x="55.43" y="54.24" width="3.67" height="0.96" fill="#bdbdbd"/><rect x="59.61" y="54.24" width="3.46" height="0.96" fill="#bdbdbd"/><rect x="63.59" y="54.24" width="5.20" height="0.96" fill="#bdbdbd"/><rect x="69.31" y="54.24" width="4.29" height="0.96" fill="#bdbdbd"/><rect x="74.12" y="54.24" width="4.95" height="0.96" fill="#bdbdbd"/><rect x="79.59" y="54.24" width="5.20" height="0.96" fill="#bdbdbd"/><rect x="85.31" y="54.24" width="2.64" height="0.96" fill="#bdbdbd"/></g><rect x="109" y="55.800000000000004" width="25.8" height="0.35" fill="#8a8a8a" /><g opacity="0.68"><rect x="15.30" y="58.64" width="3.76" height="0.96" fill="#bdbdbd"/><rect x="19.58" y="58.64" width="5.20" height="0.96" fill="#bdbdbd"/><rect x="25.31" y="58.64" width="4.82" height="0.96" fill="#bdbdbd"/><rect x="30.65" y="58.64" width="2.18" height="0.96" fill="#bdbdbd"/><rect x="33.35" y="58.64" width="2.12" height="0.96" fill="#bdbdbd"/><rect x="35.99" y="58.64" width="3.32" height="0.96" fill="#bdbdbd"/><rect x="39.83" y="58.64" width="1.94" height="0.96" fill="#bdbdbd"/><rect x="42.29" y="58.64" width="2.57" height="0.96" fill="#bdbdbd"/><rect x="45.38" y="58.64" width="1.94" height="0.96" fill="#bdbdbd"/><rect x="47.84" y="58.64" width="4.18" height="0.96" fill="#bdbdbd"/><rect x="52.54" y="58.64" width="4.61" height="0.96" fill="#bdbdbd"/><rect x="57.67" y="58.64" width="5.03" height="0.96" fill="#bdbdbd"/><rect x="63.22" y="58.64" width="2.25" height="0.96" fill="#bdbdbd"/><rect x="65.98" y="58.64" width="4.35" height="0.96" fill="#bdbdbd"/><rect x="70.85" y="58.64" width="4.14" height="0.96" fill="#bdbdbd"/><rect x="75.52" y="58.64" width="2.20" height="0.96" fill="#bdbdbd"/><rect x="78.24" y="58.64" width="4.98" height="0.96" fill="#bdbdbd"/><rect x="83.74" y="58.64" width="5.29" height="0.96" fill="#bdbdbd"/><rect x="89.55" y="58.64" width="2.49" height="0.96" fill="#bdbdbd"/><rect x="92.56" y="58.64" width="2.44" height="0.96" fill="#bdbdbd"/></g><rect x="109" y="60.2" width="25.8" height="0.35" fill="#8a8a8a" /><g opacity="0.68"><rect x="15.30" y="63.04" width="3.16" height="0.96" fill="#bdbdbd"/><rect x="18.98" y="63.04" width="3.49" height="0.96" fill="#bdbdbd"/><rect x="22.99" y="63.04" width="5.38" height="0.96" fill="#bdbdbd"/><rect x="28.89" y="63.04" width="4.79" height="0.96" fill="#bdbdbd"/><rect x="34.20" y="63.04" width="2.27" height="0.96" fill="#bdbdbd"/><rect x="36.99" y="63.04" width="3.28" height="0.96" fill="#bdbdbd"/><rect x="40.80" y="63.04" width="3.60" height="0.96" fill="#bdbdbd"/><rect x="44.92" y="63.04" width="2.94" height="0.96" fill="#bdbdbd"/><rect x="48.38" y="63.04" width="2.40" height="0.96" fill="#bdbdbd"/><rect x="51.30" y="63.04" width="2.86" height="0.96" fill="#bdbdbd"/><rect x="54.68" y="63.04" width="4.37" height="0.96" fill="#bdbdbd"/><rect x="59.57" y="63.04" width="1.74" height="0.96" fill="#bdbdbd"/><rect x="61.83" y="63.04" width="1.87" height="0.96" fill="#bdbdbd"/></g><rect x="109" y="64.60000000000001" width="25.8" height="0.35" fill="#8a8a8a" /><g opacity="0.68"><rect x="15.30" y="67.44" width="3.32" height="0.96" fill="#bdbdbd"/><rect x="19.14" y="67.44" width="1.73" height="0.96" fill="#bdbdbd"/><rect x="21.39" y="67.44" width="2.91" height="0.96" fill="#bdbdbd"/><rect x="24.82" y="67.44" width="4.01" height="0.96" fill="#bdbdbd"/><rect x="29.35" y="67.44" width="3.59" height="0.96" fill="#bdbdbd"/><rect x="33.46" y="67.44" width="1.91" height="0.96" fill="#bdbdbd"/><rect x="35.88" y="67.44" width="5.36" height="0.96" fill="#bdbdbd"/><rect x="41.77" y="67.44" width="4.62" height="0.96" fill="#bdbdbd"/><rect x="46.91" y="67.44" width="5.31" height="0.96" fill="#bdbdbd"/><rect x="52.74" y="67.44" width="2.06" height="0.96" fill="#bdbdbd"/><rect x="55.32" y="67.44" width="2.66" height="0.96" fill="#bdbdbd"/><rect x="58.50" y="67.44" width="1.82" height="0.96" fill="#bdbdbd"/><rect x="60.84" y="67.44" width="4.59" height="0.96" fill="#bdbdbd"/><rect x="65.94" y="67.44" width="2.68" height="0.96" fill="#bdbdbd"/><rect x="69.14" y="67.44" width="2.15" height="0.96" fill="#bdbdbd"/><rect x="71.82" y="67.44" width="3.25" height="0.96" fill="#bdbdbd"/><rect x="75.59" y="67.44" width="5.08" height="0.96" fill="#bdbdbd"/><rect x="81.19" y="67.44" width="4.74" height="0.96" fill="#bdbdbd"/><rect x="86.45" y="67.44" width="1.55" height="0.96" fill="#bdbdbd"/></g><rect x="109" y="69.0" width="25.8" height="0.35" fill="#8a8a8a" /><g opacity="0.68"><rect x="7.50" y="75.71" width="2.12" height="0.91" fill="#9a9a9a"/><rect x="10.11" y="75.71" width="3.39" height="0.91" fill="#9a9a9a"/></g><rect x="137" y="75.3" width="1.4" height="1.8" fill="#9a9a9a" /></svg></div>
<div class="pn" style="left:807.2px;top:254px">4</div>
<div class="th" style="left:110.7px;top:297px"><svg width="146" height="82" viewBox="0 0 146 82" font-family="Liberation Sans, sans-serif"><defs><filter id="bl4" x="-5%" y="-5%" width="110%" height="110%"><feGaussianBlur stdDeviation="1.5"/></filter></defs><rect x="0" y="0" width="146" height="82" fill="#2c2c2c" /><rect x="7.5" y="0" width="21.9" height="21.9" fill="#3b3b3b" /><text x="15" y="15.6" font-size="7.2" font-weight="bold" fill="#ececec" stroke="#ececec" stroke-width="0.25" textLength="37.5" lengthAdjust="spacingAndGlyphs">DEFINITIONS</text><g opacity="0.85"><rect x="15.00" y="25.10" width="4.19" height="1.28" fill="#d6d6d6"/><rect x="19.76" y="25.10" width="4.72" height="1.28" fill="#d6d6d6"/><rect x="25.05" y="25.10" width="0.35" height="1.28" fill="#d6d6d6"/></g><g opacity="0.68"><rect x="15.00" y="29.14" width="1.88" height="0.96" fill="#bdbdbd"/><rect x="17.40" y="29.14" width="4.25" height="0.96" fill="#bdbdbd"/><rect x="22.17" y="29.14" width="3.26" height="0.96" fill="#bdbdbd"/><rect x="25.95" y="29.14" width="1.94" height="0.96" fill="#bdbdbd"/><rect x="28.41" y="29.14" width="5.19" height="0.96" fill="#bdbdbd"/><rect x="34.12" y="29.14" width="4.05" height="0.96" fill="#bdbdbd"/><rect x="38.68" y="29.14" width="4.67" height="0.96" fill="#bdbdbd"/><rect x="43.87" y="29.14" width="1.98" height="0.96" fill="#bdbdbd"/><rect x="46.37" y="29.14" width="4.88" height="0.96" fill="#bdbdbd"/><rect x="51.77" y="29.14" width="1.92" height="0.96" fill="#bdbdbd"/><rect x="54.21" y="29.14" width="4.90" height="0.96" fill="#bdbdbd"/><rect x="59.63" y="29.14" width="3.37" height="0.96" fill="#bdbdbd"/><rect x="63.52" y="29.14" width="2.48" height="0.96" fill="#bdbdbd"/></g><g opacity="0.85"><rect x="15.00" y="35.30" width="4.11" height="1.28" fill="#d6d6d6"/><rect x="19.69" y="35.30" width="0.51" height="1.28" fill="#d6d6d6"/></g><g opacity="0.68"><rect x="15.00" y="39.34" width="2.67" height="0.96" fill="#bdbdbd"/><rect x="18.19" y="39.34" width="2.15" height="0.96" fill="#bdbdbd"/><rect x="20.86" y="39.34" width="3.64" height="0.96" fill="#bdbdbd"/><rect x="25.02" y="39.34" width="2.56" height="0.96" fill="#bdbdbd"/><rect x="28.11" y="39.34" width="2.08" height="0.96" fill="#bdbdbd"/><rect x="30.70" y="39.34" width="2.27" height="0.96" fill="#bdbdbd"/><rect x="33.50" y="39.34" width="1.86" height="0.96" fill="#bdbdbd"/><rect x="35.87" y="39.34" width="1.13" height="0.96" fill="#bdbdbd"/></g><g opacity="0.85"><rect x="15.00" y="45.50" width="3.12" height="1.28" fill="#d6d6d6"/><rect x="18.69" y="45.50" width="3.09" height="1.28" fill="#d6d6d6"/><rect x="22.36" y="45.50" width="0.44" height="1.28" fill="#d6d6d6"/></g><g opacity="0.68"><rect x="15.00" y="49.54" width="2.75" height="0.96" fill="#bdbdbd"/><rect x="18.27" y="49.54" width="3.54" height="0.96" fill="#bdbdbd"/><rect x="22.34" y="49.54" width="2.33" height="0.96" fill="#bdbdbd"/><rect x="25.19" y="49.54" width="2.97" height="0.96" fill="#bdbdbd"/><rect x="28.68" y="49.54" width="1.73" height="0.96" fill="#bdbdbd"/><rect x="30.93" y="49.54" width="2.61" height="0.96" fill="#bdbdbd"/><rect x="34.06" y="49.54" width="1.72" height="0.96" fill="#bdbdbd"/><rect x="36.30" y="49.54" width="4.42" height="0.96" fill="#bdbdbd"/><rect x="41.24" y="49.54" width="3.73" height="0.96" fill="#bdbdbd"/><rect x="45.49" y="49.54" width="2.38" height="0.96" fill="#bdbdbd"/><rect x="48.39" y="49.54" width="3.45" height="0.96" fill="#bdbdbd"/><rect x="52.36" y="49.54" width="5.17" height="0.96" fill="#bdbdbd"/><rect x="58.05" y="49.54" width="2.07" height="0.96" fill="#bdbdbd"/><rect x="60.63" y="49.54" width="4.37" height="0.96" fill="#bdbdbd"/></g><g opacity="0.85"><rect x="15.00" y="55.70" width="3.62" height="1.28" fill="#d6d6d6"/><rect x="19.19" y="55.70" width="3.88" height="1.28" fill="#d6d6d6"/><rect x="23.64" y="55.70" width="0.46" height="1.28" fill="#d6d6d6"/></g><g opacity="0.68"><rect x="15.00" y="59.74" width="3.14" height="0.96" fill="#bdbdbd"/><rect x="18.66" y="59.74" width="3.57" height="0.96" fill="#bdbdbd"/><rect x="22.75" y="59.74" width="4.25" height="0.96" fill="#bdbdbd"/><rect x="27.51" y="59.74" width="5.35" height="0.96" fill="#bdbdbd"/><rect x="33.38" y="59.74" width="2.95" height="0.96" fill="#bdbdbd"/><rect x="36.86" y="59.74" width="4.79" height="0.96" fill="#bdbdbd"/><rect x="42.16" y="59.74" width="4.32" height="0.96" fill="#bdbdbd"/><rect x="47.00" y="59.74" width="2.00" height="0.96" fill="#bdbdbd"/></g><g opacity="0.85"><rect x="15.00" y="66.20" width="3.50" height="1.28" fill="#d6d6d6"/><rect x="19.07" y="66.20" width="2.43" height="1.28" fill="#d6d6d6"/></g><g opacity="0.68"><rect x="15.00" y="70.24" width="1.87" height="0.96" fill="#bdbdbd"/><rect x="17.39" y="70.24" width="2.15" height="0.96" fill="#bdbdbd"/><rect x="20.06" y="70.24" width="1.93" height="0.96" fill="#bdbdbd"/><rect x="22.52" y="70.24" width="4.45" height="0.96" fill="#bdbdbd"/><rect x="27.48" y="70.24" width="2.63" height="0.96" fill="#bdbdbd"/><rect x="30.63" y="70.24" width="2.28" height="0.96" fill="#bdbdbd"/><rect x="33.42" y="70.24" width="1.98" height="0.96" fill="#bdbdbd"/><rect x="35.93" y="70.24" width="4.82" height="0.96" fill="#bdbdbd"/><rect x="41.27" y="70.24" width="4.93" height="0.96" fill="#bdbdbd"/><rect x="46.72" y="70.24" width="4.18" height="0.96" fill="#bdbdbd"/><rect x="51.42" y="70.24" width="2.72" height="0.96" fill="#bdbdbd"/><rect x="54.67" y="70.24" width="2.57" height="0.96" fill="#bdbdbd"/><rect x="57.76" y="70.24" width="2.77" height="0.96" fill="#bdbdbd"/><rect x="61.05" y="70.24" width="3.39" height="0.96" fill="#bdbdbd"/><rect x="64.96" y="70.24" width="2.04" height="0.96" fill="#bdbdbd"/></g><g opacity="0.85"><rect x="78.60" y="25.10" width="3.67" height="1.28" fill="#d6d6d6"/><rect x="82.84" y="25.10" width="2.26" height="1.28" fill="#d6d6d6"/></g><g opacity="0.68"><rect x="78.60" y="29.14" width="5.27" height="0.96" fill="#bdbdbd"/><rect x="84.39" y="29.14" width="5.31" height="0.96" fill="#bdbdbd"/><rect x="90.23" y="29.14" width="3.72" height="0.96" fill="#bdbdbd"/><rect x="94.47" y="29.14" width="2.58" height="0.96" fill="#bdbdbd"/><rect x="97.57" y="29.14" width="5.29" height="0.96" fill="#bdbdbd"/><rect x="103.38" y="29.14" width="2.83" height="0.96" fill="#bdbdbd"/><rect x="106.72" y="29.14" width="3.00" height="0.96" fill="#bdbdbd"/><rect x="110.25" y="29.14" width="1.35" height="0.96" fill="#bdbdbd"/></g><g opacity="0.85"><rect x="78.60" y="35.30" width="3.41" height="1.28" fill="#d6d6d6"/><rect x="82.58" y="35.30" width="3.79" height="1.28" fill="#d6d6d6"/><rect x="86.94" y="35.30" width="0.76" height="1.28" fill="#d6d6d6"/></g><g opacity="0.68"><rect x="78.60" y="39.34" width="2.42" height="0.96" fill="#bdbdbd"/><rect x="81.54" y="39.34" width="3.56" height="0.96" fill="#bdbdbd"/><rect x="85.62" y="39.34" width="1.69" height="0.96" fill="#bdbdbd"/><rect x="87.82" y="39.34" width="2.66" height="0.96" fill="#bdbdbd"/><rect x="91.00" y="39.34" width="2.00" height="0.96" fill="#bdbdbd"/><rect x="93.53" y="39.34" width="3.16" height="0.96" fill="#bdbdbd"/><rect x="97.21" y="39.34" width="1.82" height="0.96" fill="#bdbdbd"/><rect x="99.55" y="39.34" width="1.75" height="0.96" fill="#bdbdbd"/><rect x="101.82" y="39.34" width="2.81" height="0.96" fill="#bdbdbd"/><rect x="105.15" y="39.34" width="2.54" height="0.96" fill="#bdbdbd"/><rect x="108.21" y="39.34" width="3.86" height="0.96" fill="#bdbdbd"/><rect x="112.59" y="39.34" width="3.65" height="0.96" fill="#bdbdbd"/><rect x="116.77" y="39.34" width="4.48" height="0.96" fill="#bdbdbd"/><rect x="121.77" y="39.34" width="4.13" height="0.96" fill="#bdbdbd"/><rect x="126.42" y="39.34" width="3.18" height="0.96" fill="#bdbdbd"/></g><g opacity="0.85"><rect x="78.60" y="45.50" width="5.20" height="1.28" fill="#d6d6d6"/></g><g opacity="0.68"><rect x="78.60" y="49.54" width="3.13" height="0.96" fill="#bdbdbd"/><rect x="82.25" y="49.54" width="2.89" height="0.96" fill="#bdbdbd"/><rect x="85.66" y="49.54" width="5.36" height="0.96" fill="#bdbdbd"/><rect x="91.54" y="49.54" width="2.23" height="0.96" fill="#bdbdbd"/><rect x="94.28" y="49.54" width="4.38" height="0.96" fill="#bdbdbd"/><rect x="99.19" y="49.54" width="4.08" height="0.96" fill="#bdbdbd"/><rect x="103.78" y="49.54" width="1.83" height="0.96" fill="#bdbdbd"/><rect x="106.14" y="49.54" width="4.80" height="0.96" fill="#bdbdbd"/><rect x="111.45" y="49.54" width="5.01" height="0.96" fill="#bdbdbd"/><rect x="116.99" y="49.54" width="3.61" height="0.96" fill="#bdbdbd"/></g><g opacity="0.85"><rect x="78.60" y="55.70" width="4.86" height="1.28" fill="#d6d6d6"/><rect x="84.03" y="55.70" width="5.18" height="1.28" fill="#d6d6d6"/><rect x="89.79" y="55.70" width="0.51" height="1.28" fill="#d6d6d6"/></g><g opacity="0.68"><rect x="78.60" y="59.74" width="3.63" height="0.96" fill="#bdbdbd"/><rect x="82.75" y="59.74" width="3.56" height="0.96" fill="#bdbdbd"/><rect x="86.83" y="59.74" width="4.80" height="0.96" fill="#bdbdbd"/><rect x="92.15" y="59.74" width="4.68" height="0.96" fill="#bdbdbd"/><rect x="97.35" y="59.74" width="4.77" height="0.96" fill="#bdbdbd"/><rect x="102.64" y="59.74" width="3.86" height="0.96" fill="#bdbdbd"/><rect x="107.01" y="59.74" width="5.01" height="0.96" fill="#bdbdbd"/><rect x="112.55" y="59.74" width="4.23" height="0.96" fill="#bdbdbd"/><rect x="117.30" y="59.74" width="1.30" height="0.96" fill="#bdbdbd"/></g><g opacity="0.85"><rect x="78.60" y="66.20" width="2.78" height="1.28" fill="#d6d6d6"/><rect x="81.95" y="66.20" width="1.96" height="1.28" fill="#d6d6d6"/><rect x="84.49" y="66.20" width="2.38" height="1.28" fill="#d6d6d6"/></g><g opacity="0.68"><rect x="78.60" y="70.24" width="3.02" height="0.96" fill="#bdbdbd"/><rect x="82.14" y="70.24" width="2.06" height="0.96" fill="#bdbdbd"/><rect x="84.72" y="70.24" width="4.80" height="0.96" fill="#bdbdbd"/><rect x="90.04" y="70.24" width="3.76" height="0.96" fill="#bdbdbd"/><rect x="94.32" y="70.24" width="4.02" height="0.96" fill="#bdbdbd"/><rect x="98.86" y="70.24" width="4.02" height="0.96" fill="#bdbdbd"/><rect x="103.40" y="70.24" width="4.22" height="0.96" fill="#bdbdbd"/><rect x="108.14" y="70.24" width="3.50" height="0.96" fill="#bdbdbd"/><rect x="112.16" y="70.24" width="1.68" height="0.96" fill="#bdbdbd"/><rect x="114.36" y="70.24" width="4.66" height="0.96" fill="#bdbdbd"/><rect x="119.54" y="70.24" width="4.47" height="0.96" fill="#bdbdbd"/></g><g opacity="0.68"><rect x="7.50" y="75.71" width="3.38" height="0.91" fill="#9a9a9a"/><rect x="11.37" y="75.71" width="2.13" height="0.91" fill="#9a9a9a"/></g><rect x="137" y="75.3" width="1.4" height="1.8" fill="#9a9a9a" /></svg></div>
<div class="pn" style="left:163.7px;top:397px">5</div>
<div class="th" style="left:325.2px;top:297px"><svg width="146" height="82" viewBox="0 0 146 82" font-family="Liberation Sans, sans-serif"><defs><filter id="bl5" x="-5%" y="-5%" width="110%" height="110%"><feGaussianBlur stdDeviation="1.5"/></filter></defs><rect x="0" y="0" width="146" height="82" fill="#2c2c2c" /><rect x="7.8" y="0" width="21.4" height="21.9" fill="#3b3b3b" /><text x="15.3" y="15.6" font-size="7.4" font-weight="bold" fill="#ececec" stroke="#ececec" stroke-width="0.26" textLength="39.4" lengthAdjust="spacingAndGlyphs">CROSSWORD</text><g opacity="0.85"><rect x="15.30" y="26.44" width="4.76" height="1.33" fill="#d6d6d6"/><rect x="20.66" y="26.44" width="1.64" height="1.33" fill="#d6d6d6"/></g><g opacity="0.68"><rect x="15.30" y="30.84" width="4.43" height="0.96" fill="#bdbdbd"/><rect x="20.25" y="30.84" width="2.61" height="0.96" fill="#bdbdbd"/><rect x="23.38" y="30.84" width="1.95" height="0.96" fill="#bdbdbd"/><rect x="25.85" y="30.84" width="2.66" height="0.96" fill="#bdbdbd"/><rect x="29.03" y="30.84" width="4.40" height="0.96" fill="#bdbdbd"/><rect x="33.95" y="30.84" width="2.44" height="0.96" fill="#bdbdbd"/><rect x="36.91" y="30.84" width="4.44" height="0.96" fill="#bdbdbd"/><rect x="41.87" y="30.84" width="3.43" height="0.96" fill="#bdbdbd"/></g><g opacity="0.68"><rect x="15.30" y="34.24" width="3.52" height="0.96" fill="#bdbdbd"/><rect x="19.34" y="34.24" width="3.10" height="0.96" fill="#bdbdbd"/><rect x="22.96" y="34.24" width="3.46" height="0.96" fill="#bdbdbd"/><rect x="26.94" y="34.24" width="4.23" height="0.96" fill="#bdbdbd"/><rect x="31.69" y="34.24" width="4.54" height="0.96" fill="#bdbdbd"/><rect x="36.76" y="34.24" width="3.98" height="0.96" fill="#bdbdbd"/><rect x="41.26" y="34.24" width="2.04" height="0.96" fill="#bdbdbd"/></g><g opacity="0.68"><rect x="15.30" y="37.74" width="1.96" height="0.96" fill="#bdbdbd"/><rect x="17.78" y="37.74" width="2.22" height="0.96" fill="#bdbdbd"/><rect x="20.52" y="37.74" width="2.62" height="0.96" fill="#bdbdbd"/><rect x="23.66" y="37.74" width="4.45" height="0.96" fill="#bdbdbd"/><rect x="28.63" y="37.74" width="2.81" height="0.96" fill="#bdbdbd"/><rect x="31.96" y="37.74" width="3.80" height="0.96" fill="#bdbdbd"/><rect x="36.27" y="37.74" width="1.71" height="0.96" fill="#bdbdbd"/><rect x="38.51" y="37.74" width="1.89" height="0.96" fill="#bdbdbd"/><rect x="40.92" y="37.74" width="2.67" height="0.96" fill="#bdbdbd"/><rect x="44.12" y="37.74" width="4.19" height="0.96" fill="#bdbdbd"/><rect x="48.82" y="37.74" width="0.48" height="0.96" fill="#bdbdbd"/></g><g opacity="0.85"><rect x="15.30" y="44.04" width="4.83" height="1.33" fill="#d6d6d6"/><rect x="20.73" y="44.04" width="0.57" height="1.33" fill="#d6d6d6"/></g><g opacity="0.68"><rect x="15.30" y="48.44" width="3.60" height="0.96" fill="#bdbdbd"/><rect x="19.42" y="48.44" width="3.41" height="0.96" fill="#bdbdbd"/><rect x="23.35" y="48.44" width="3.42" height="0.96" fill="#bdbdbd"/><rect x="27.29" y="48.44" width="2.11" height="0.96" fill="#bdbdbd"/><rect x="29.92" y="48.44" width="5.02" height="0.96" fill="#bdbdbd"/><rect x="35.46" y="48.44" width="2.41" height="0.96" fill="#bdbdbd"/><rect x="38.39" y="48.44" width="5.33" height="0.96" fill="#bdbdbd"/><rect x="44.25" y="48.44" width="5.18" height="0.96" fill="#bdbdbd"/><rect x="49.94" y="48.44" width="1.73" height="0.96" fill="#bdbdbd"/><rect x="52.20" y="48.44" width="3.39" height="0.96" fill="#bdbdbd"/><rect x="56.10" y="48.44" width="1.20" height="0.96" fill="#bdbdbd"/></g><g opacity="0.68"><rect x="15.30" y="51.74" width="5.30" height="0.96" fill="#bdbdbd"/><rect x="21.12" y="51.74" width="3.35" height="0.96" fill="#bdbdbd"/><rect x="24.99" y="51.74" width="2.67" height="0.96" fill="#bdbdbd"/><rect x="28.18" y="51.74" width="2.45" height="0.96" fill="#bdbdbd"/></g><g opacity="0.68"><rect x="15.30" y="55.24" width="5.21" height="0.96" fill="#bdbdbd"/><rect x="21.03" y="55.24" width="2.46" height="0.96" fill="#bdbdbd"/><rect x="24.01" y="55.24" width="3.85" height="0.96" fill="#bdbdbd"/><rect x="28.38" y="55.24" width="2.20" height="0.96" fill="#bdbdbd"/><rect x="31.09" y="55.24" width="3.63" height="0.96" fill="#bdbdbd"/><rect x="35.25" y="55.24" width="5.05" height="0.96" fill="#bdbdbd"/></g><g opacity="0.68"><rect x="15.30" y="58.84" width="2.16" height="0.96" fill="#bdbdbd"/><rect x="17.98" y="58.84" width="4.74" height="0.96" fill="#bdbdbd"/><rect x="23.25" y="58.84" width="3.57" height="0.96" fill="#bdbdbd"/><rect x="27.34" y="58.84" width="4.99" height="0.96" fill="#bdbdbd"/><rect x="32.85" y="58.84" width="4.30" height="0.96" fill="#bdbdbd"/><rect x="37.68" y="58.84" width="2.53" height="0.96" fill="#bdbdbd"/><rect x="40.73" y="58.84" width="5.03" height="0.96" fill="#bdbdbd"/><rect x="46.28" y="58.84" width="2.02" height="0.96" fill="#bdbdbd"/></g><g opacity="0.85"><rect x="15.30" y="64.24" width="2.02" height="1.33" fill="#d6d6d6"/><rect x="17.92" y="64.24" width="1.93" height="1.33" fill="#d6d6d6"/><rect x="20.45" y="64.24" width="1.85" height="1.33" fill="#d6d6d6"/></g><g opacity="0.68"><rect x="15.30" y="68.24" width="3.36" height="0.96" fill="#bdbdbd"/><rect x="19.18" y="68.24" width="2.80" height="0.96" fill="#bdbdbd"/><rect x="22.50" y="68.24" width="2.19" height="0.96" fill="#bdbdbd"/><rect x="25.21" y="68.24" width="2.96" height="0.96" fill="#bdbdbd"/><rect x="28.69" y="68.24" width="2.85" height="0.96" fill="#bdbdbd"/><rect x="32.06" y="68.24" width="4.82" height="0.96" fill="#bdbdbd"/><rect x="37.40" y="68.24" width="1.67" height="0.96" fill="#bdbdbd"/><rect x="39.59" y="68.24" width="4.48" height="0.96" fill="#bdbdbd"/><rect x="44.59" y="68.24" width="4.81" height="0.96" fill="#bdbdbd"/><rect x="49.92" y="68.24" width="2.12" height="0.96" fill="#bdbdbd"/><rect x="52.56" y="68.24" width="5.14" height="0.96" fill="#bdbdbd"/><rect x="58.22" y="68.24" width="4.34" height="0.96" fill="#bdbdbd"/><rect x="63.08" y="68.24" width="5.05" height="0.96" fill="#bdbdbd"/></g><rect x="66.4" y="24.4" width="5.2" height="5.2" fill="none" stroke="#858585" stroke-width="0.38"/><rect x="71.60000000000001" y="24.4" width="5.2" height="5.2" fill="none" stroke="#858585" stroke-width="0.38"/><rect x="76.80000000000001" y="24.4" width="5.2" height="5.2" fill="none" stroke="#858585" stroke-width="0.38"/><rect x="82.0" y="24.4" width="5.2" height="5.2" fill="none" stroke="#858585" stroke-width="0.38"/><rect x="87.2" y="24.4" width="5.2" height="5.2" fill="none" stroke="#858585" stroke-width="0.38"/><rect x="92.4" y="24.4" width="5.2" height="5.2" fill="none" stroke="#858585" stroke-width="0.38"/><rect x="97.60000000000001" y="24.4" width="5.2" height="5.2" fill="none" stroke="#858585" stroke-width="0.38"/><rect x="92.4" y="19.2" width="5.2" height="5.2" fill="none" stroke="#858585" stroke-width="0.38"/><rect x="92.4" y="29.6" width="5.2" height="5.2" fill="none" stroke="#858585" stroke-width="0.38"/><rect x="92.4" y="34.8" width="5.2" height="5.2" fill="none" stroke="#858585" stroke-width="0.38"/><rect x="92.4" y="40.0" width="5.2" height="5.2" fill="none" stroke="#858585" stroke-width="0.38"/><rect x="92.4" y="45.2" width="5.2" height="5.2" fill="none" stroke="#858585" stroke-width="0.38"/><rect x="82.2" y="35.0" width="5.2" height="5.2" fill="none" stroke="#858585" stroke-width="0.38"/><rect x="82.2" y="40.2" width="5.2" height="5.2" fill="none" stroke="#858585" stroke-width="0.38"/><rect x="82.2" y="45.4" width="5.2" height="5.2" fill="none" stroke="#858585" stroke-width="0.38"/><rect x="82.2" y="50.6" width="5.2" height="5.2" fill="none" stroke="#858585" stroke-width="0.38"/><rect x="87.4" y="40.2" width="5.2" height="5.2" fill="none" stroke="#858585" stroke-width="0.38"/><rect x="92.60000000000001" y="40.2" width="5.2" height="5.2" fill="none" stroke="#858585" stroke-width="0.38"/><rect x="97.80000000000001" y="40.2" width="5.2" height="5.2" fill="none" stroke="#858585" stroke-width="0.38"/><rect x="103.0" y="40.2" width="5.2" height="5.2" fill="none" stroke="#858585" stroke-width="0.38"/><rect x="103.0" y="35.0" width="5.2" height="5.2" fill="none" stroke="#858585" stroke-width="0.38"/><rect x="103.0" y="45.4" width="5.2" height="5.2" fill="none" stroke="#858585" stroke-width="0.38"/><rect x="103.0" y="50.6" width="5.2" height="5.2" fill="none" stroke="#858585" stroke-width="0.38"/><rect x="103.0" y="55.8" width="5.2" height="5.2" fill="none" stroke="#858585" stroke-width="0.38"/><rect x="103.0" y="61.0" width="5.2" height="5.2" fill="none" stroke="#858585" stroke-width="0.38"/><rect x="103.0" y="66.2" width="5.2" height="5.2" fill="none" stroke="#858585" stroke-width="0.38"/><rect x="123.6" y="40.2" width="5.2" height="5.2" fill="none" stroke="#858585" stroke-width="0.38"/><rect x="123.6" y="45.400000000000006" width="5.2" height="5.2" fill="none" stroke="#858585" stroke-width="0.38"/><rect x="123.6" y="50.6" width="5.2" height="5.2" fill="none" stroke="#858585" stroke-width="0.38"/><rect x="123.6" y="55.800000000000004" width="5.2" height="5.2" fill="none" stroke="#858585" stroke-width="0.38"/><rect x="92.4" y="55.7" width="5.2" height="5.2" fill="none" stroke="#858585" stroke-width="0.38"/><rect x="97.60000000000001" y="55.7" width="5.2" height="5.2" fill="none" stroke="#858585" stroke-width="0.38"/><rect x="102.80000000000001" y="55.7" width="5.2" height="5.2" fill="none" stroke="#858585" stroke-width="0.38"/><rect x="108.0" y="55.7" width="5.2" height="5.2" fill="none" stroke="#858585" stroke-width="0.38"/><rect x="113.2" y="55.7" width="5.2" height="5.2" fill="none" stroke="#858585" stroke-width="0.38"/><rect x="118.4" y="55.7" width="5.2" height="5.2" fill="none" stroke="#858585" stroke-width="0.38"/><rect x="123.60000000000001" y="55.7" width="5.2" height="5.2" fill="none" stroke="#858585" stroke-width="0.38"/><rect x="128.8" y="55.7" width="5.2" height="5.2" fill="none" stroke="#858585" stroke-width="0.38"/><rect x="134.0" y="55.7" width="5.2" height="5.2" fill="none" stroke="#858585" stroke-width="0.38"/><g opacity="0.68"><rect x="7.50" y="75.71" width="2.62" height="0.91" fill="#9a9a9a"/><rect x="10.61" y="75.71" width="2.89" height="0.91" fill="#9a9a9a"/></g><rect x="137" y="75.3" width="1.4" height="1.8" fill="#9a9a9a" /></svg></div>
<div class="pn" style="left:378.2px;top:397px">6</div>
<div class="th" style="left:539.7px;top:297px"><svg width="146" height="82" viewBox="0 0 146 82" font-family="Liberation Sans, sans-serif"><defs><filter id="bl6" x="-5%" y="-5%" width="110%" height="110%"><feGaussianBlur stdDeviation="1.5"/></filter></defs><rect x="0" y="0" width="146" height="82" fill="#2c2c2c" /><text x="15.3" y="15.6" font-size="7.4" font-weight="bold" fill="#ececec" stroke="#ececec" stroke-width="0.26" textLength="27.4" lengthAdjust="spacingAndGlyphs">READING</text><g opacity="0.68"><rect x="82.00" y="10.24" width="3.61" height="1.10" fill="#d0d0d0"/><rect x="86.21" y="10.24" width="6.22" height="1.10" fill="#d0d0d0"/><rect x="93.03" y="10.24" width="4.46" height="1.10" fill="#d0d0d0"/><rect x="98.09" y="10.24" width="3.47" height="1.10" fill="#d0d0d0"/><rect x="102.16" y="10.24" width="3.76" height="1.10" fill="#d0d0d0"/><rect x="106.52" y="10.24" width="3.10" height="1.10" fill="#d0d0d0"/><rect x="110.22" y="10.24" width="2.12" height="1.10" fill="#d0d0d0"/><rect x="112.94" y="10.24" width="2.36" height="1.10" fill="#d0d0d0"/><rect x="115.89" y="10.24" width="5.52" height="1.10" fill="#d0d0d0"/><rect x="122.01" y="10.24" width="3.15" height="1.10" fill="#d0d0d0"/><rect x="125.76" y="10.24" width="5.95" height="1.10" fill="#d0d0d0"/><rect x="132.30" y="10.24" width="2.99" height="1.10" fill="#d0d0d0"/></g><g opacity="0.68"><rect x="82.00" y="14.14" width="3.06" height="1.10" fill="#d0d0d0"/><rect x="85.66" y="14.14" width="4.12" height="1.10" fill="#d0d0d0"/><rect x="90.38" y="14.14" width="2.74" height="1.10" fill="#d0d0d0"/><rect x="93.71" y="14.14" width="3.53" height="1.10" fill="#d0d0d0"/><rect x="97.84" y="14.14" width="6.04" height="1.10" fill="#d0d0d0"/><rect x="104.48" y="14.14" width="5.73" height="1.10" fill="#d0d0d0"/><rect x="110.80" y="14.14" width="5.42" height="1.10" fill="#d0d0d0"/><rect x="116.82" y="14.14" width="4.64" height="1.10" fill="#d0d0d0"/><rect x="122.05" y="14.14" width="5.86" height="1.10" fill="#d0d0d0"/><rect x="128.51" y="14.14" width="1.49" height="1.10" fill="#d0d0d0"/></g><rect x="10.6" y="25" width="28.2" height="5.2" rx="1.6" fill="#f4c46c"/><g opacity="0.6"><g opacity="0.68"><rect x="12.40" y="27.24" width="3.73" height="0.96" fill="#3a3a3a"/><rect x="16.65" y="27.24" width="4.37" height="0.96" fill="#3a3a3a"/><rect x="21.53" y="27.24" width="1.85" height="0.96" fill="#3a3a3a"/><rect x="23.90" y="27.24" width="4.41" height="0.96" fill="#3a3a3a"/><rect x="28.84" y="27.24" width="0.48" height="0.96" fill="#3a3a3a"/></g></g><rect x="17.7" y="33.3" width="27.6" height="5" rx="1.6" fill="#e8e8e8"/><g opacity="0.6"><g opacity="0.68"><rect x="19.50" y="35.44" width="4.49" height="0.96" fill="#3a3a3a"/><rect x="24.51" y="35.44" width="4.08" height="0.96" fill="#3a3a3a"/><rect x="29.11" y="35.44" width="2.74" height="0.96" fill="#3a3a3a"/><rect x="32.37" y="35.44" width="1.85" height="0.96" fill="#3a3a3a"/><rect x="34.74" y="35.44" width="1.32" height="0.96" fill="#3a3a3a"/></g></g><rect x="10.6" y="41.7" width="28.2" height="7.8" rx="1.6" fill="#f4c46c"/><g opacity="0.6"><g opacity="0.68"><rect x="12.40" y="43.94" width="2.14" height="0.96" fill="#3a3a3a"/><rect x="15.06" y="43.94" width="3.44" height="0.96" fill="#3a3a3a"/><rect x="19.02" y="43.94" width="2.96" height="0.96" fill="#3a3a3a"/><rect x="22.50" y="43.94" width="2.78" height="0.96" fill="#3a3a3a"/><rect x="25.80" y="43.94" width="3.52" height="0.96" fill="#3a3a3a"/></g></g><g opacity="0.6"><g opacity="0.68"><rect x="12.40" y="46.54" width="5.33" height="0.96" fill="#3a3a3a"/><rect x="18.25" y="46.54" width="2.64" height="0.96" fill="#3a3a3a"/><rect x="21.41" y="46.54" width="4.13" height="0.96" fill="#3a3a3a"/><rect x="26.06" y="46.54" width="2.79" height="0.96" fill="#3a3a3a"/></g></g><rect x="17.7" y="53" width="27.6" height="4.8" rx="1.6" fill="#e8e8e8"/><g opacity="0.6"><g opacity="0.68"><rect x="19.50" y="55.04" width="3.76" height="0.96" fill="#3a3a3a"/><rect x="23.78" y="55.04" width="3.15" height="0.96" fill="#3a3a3a"/><rect x="27.44" y="55.04" width="2.29" height="0.96" fill="#3a3a3a"/><rect x="30.26" y="55.04" width="2.27" height="0.96" fill="#3a3a3a"/><rect x="33.05" y="55.04" width="2.45" height="0.96" fill="#3a3a3a"/></g></g><rect x="10.6" y="61.3" width="28.2" height="7.7" rx="1.6" fill="#f4c46c"/><g opacity="0.6"><g opacity="0.68"><rect x="12.40" y="63.49" width="5.06" height="0.96" fill="#3a3a3a"/><rect x="17.98" y="63.49" width="3.53" height="0.96" fill="#3a3a3a"/><rect x="22.03" y="63.49" width="2.49" height="0.96" fill="#3a3a3a"/><rect x="25.05" y="63.49" width="4.27" height="0.96" fill="#3a3a3a"/></g></g><g opacity="0.6"><g opacity="0.68"><rect x="12.40" y="66.09" width="5.40" height="0.96" fill="#3a3a3a"/><rect x="18.32" y="66.09" width="3.35" height="0.96" fill="#3a3a3a"/><rect x="22.20" y="66.09" width="2.19" height="0.96" fill="#3a3a3a"/><rect x="24.91" y="66.09" width="2.39" height="0.96" fill="#3a3a3a"/><rect x="27.82" y="66.09" width="1.50" height="0.96" fill="#3a3a3a"/></g></g><rect x="67.7" y="23.4" width="27.8" height="7.6" rx="1.6" fill="#e8e8e8"/><g opacity="0.6"><g opacity="0.68"><rect x="69.50" y="25.54" width="2.95" height="0.96" fill="#3a3a3a"/><rect x="72.97" y="25.54" width="2.01" height="0.96" fill="#3a3a3a"/><rect x="75.50" y="25.54" width="2.56" height="0.96" fill="#3a3a3a"/><rect x="78.58" y="25.54" width="2.64" height="0.96" fill="#3a3a3a"/><rect x="81.74" y="25.54" width="3.80" height="0.96" fill="#3a3a3a"/></g></g><g opacity="0.6"><g opacity="0.68"><rect x="69.50" y="28.14" width="4.99" height="0.96" fill="#3a3a3a"/><rect x="75.01" y="28.14" width="4.48" height="0.96" fill="#3a3a3a"/><rect x="80.01" y="28.14" width="3.21" height="0.96" fill="#3a3a3a"/><rect x="83.75" y="28.14" width="2.43" height="0.96" fill="#3a3a3a"/></g></g><rect x="57" y="34.4" width="27.8" height="7.5" rx="1.6" fill="#f4c46c"/><g opacity="0.6"><g opacity="0.68"><rect x="58.80" y="36.49" width="3.63" height="0.96" fill="#3a3a3a"/><rect x="62.95" y="36.49" width="3.08" height="0.96" fill="#3a3a3a"/><rect x="66.55" y="36.49" width="2.93" height="0.96" fill="#3a3a3a"/><rect x="70.01" y="36.49" width="1.90" height="0.96" fill="#3a3a3a"/><rect x="72.43" y="36.49" width="2.71" height="0.96" fill="#3a3a3a"/></g></g><g opacity="0.6"><g opacity="0.68"><rect x="58.80" y="39.09" width="5.30" height="0.96" fill="#3a3a3a"/><rect x="64.62" y="39.09" width="2.14" height="0.96" fill="#3a3a3a"/><rect x="67.27" y="39.09" width="3.55" height="0.96" fill="#3a3a3a"/><rect x="71.35" y="39.09" width="4.03" height="0.96" fill="#3a3a3a"/></g></g><rect x="67.7" y="45.6" width="27.8" height="7.5" rx="1.6" fill="#e8e8e8"/><g opacity="0.6"><g opacity="0.68"><rect x="69.50" y="47.69" width="4.90" height="0.96" fill="#3a3a3a"/><rect x="74.92" y="47.69" width="2.48" height="0.96" fill="#3a3a3a"/><rect x="77.92" y="47.69" width="2.68" height="0.96" fill="#3a3a3a"/><rect x="81.12" y="47.69" width="2.60" height="0.96" fill="#3a3a3a"/><rect x="84.24" y="47.69" width="1.94" height="0.96" fill="#3a3a3a"/></g></g><g opacity="0.6"><g opacity="0.68"><rect x="69.50" y="50.29" width="3.34" height="0.96" fill="#3a3a3a"/><rect x="73.36" y="50.29" width="5.24" height="0.96" fill="#3a3a3a"/><rect x="79.12" y="50.29" width="4.85" height="0.96" fill="#3a3a3a"/><rect x="84.49" y="50.29" width="1.69" height="0.96" fill="#3a3a3a"/></g></g><rect x="57" y="56.7" width="27.8" height="7.7" rx="1.6" fill="#f4c46c"/><g opacity="0.6"><g opacity="0.68"><rect x="58.80" y="58.89" width="1.75" height="0.96" fill="#3a3a3a"/><rect x="61.07" y="58.89" width="1.79" height="0.96" fill="#3a3a3a"/><rect x="63.38" y="58.89" width="4.33" height="0.96" fill="#3a3a3a"/><rect x="68.22" y="58.89" width="5.03" height="0.96" fill="#3a3a3a"/><rect x="73.77" y="58.89" width="1.71" height="0.96" fill="#3a3a3a"/></g></g><g opacity="0.6"><g opacity="0.68"><rect x="58.80" y="61.49" width="3.87" height="0.96" fill="#3a3a3a"/><rect x="63.19" y="61.49" width="1.67" height="0.96" fill="#3a3a3a"/><rect x="65.38" y="61.49" width="3.13" height="0.96" fill="#3a3a3a"/><rect x="69.03" y="61.49" width="5.14" height="0.96" fill="#3a3a3a"/><rect x="74.69" y="61.49" width="0.79" height="0.96" fill="#3a3a3a"/></g></g><rect x="67.7" y="68.8" width="27.8" height="5" rx="1.6" fill="#e8e8e8"/><g opacity="0.6"><g opacity="0.68"><rect x="69.50" y="70.94" width="4.87" height="0.96" fill="#3a3a3a"/><rect x="74.89" y="70.94" width="5.31" height="0.96" fill="#3a3a3a"/><rect x="80.73" y="70.94" width="2.60" height="0.96" fill="#3a3a3a"/><rect x="83.85" y="70.94" width="2.08" height="0.96" fill="#3a3a3a"/></g></g><rect x="105" y="25.3" width="28.3" height="5.2" rx="1.6" fill="#f4c46c"/><g opacity="0.6"><g opacity="0.68"><rect x="106.80" y="27.54" width="2.25" height="0.96" fill="#3a3a3a"/><rect x="109.57" y="27.54" width="3.63" height="0.96" fill="#3a3a3a"/><rect x="113.71" y="27.54" width="4.22" height="0.96" fill="#3a3a3a"/><rect x="118.46" y="27.54" width="5.20" height="0.96" fill="#3a3a3a"/></g></g><rect x="110.3" y="34" width="27.7" height="7.7" rx="1.6" fill="#e8e8e8"/><g opacity="0.6"><g opacity="0.68"><rect x="112.10" y="36.19" width="4.37" height="0.96" fill="#3a3a3a"/><rect x="116.99" y="36.19" width="4.09" height="0.96" fill="#3a3a3a"/><rect x="121.61" y="36.19" width="4.53" height="0.96" fill="#3a3a3a"/><rect x="126.66" y="36.19" width="2.06" height="0.96" fill="#3a3a3a"/></g></g><g opacity="0.6"><g opacity="0.68"><rect x="112.10" y="38.79" width="3.73" height="0.96" fill="#3a3a3a"/><rect x="116.35" y="38.79" width="1.81" height="0.96" fill="#3a3a3a"/><rect x="118.69" y="38.79" width="4.60" height="0.96" fill="#3a3a3a"/><rect x="123.81" y="38.79" width="2.54" height="0.96" fill="#3a3a3a"/><rect x="126.87" y="38.79" width="1.85" height="0.96" fill="#3a3a3a"/></g></g><rect x="105" y="46.6" width="28.3" height="5.4" rx="1.6" fill="#f4c46c"/><g opacity="0.6"><g opacity="0.68"><rect x="106.80" y="48.94" width="4.09" height="0.96" fill="#3a3a3a"/><rect x="111.41" y="48.94" width="2.81" height="0.96" fill="#3a3a3a"/><rect x="114.73" y="48.94" width="2.15" height="0.96" fill="#3a3a3a"/><rect x="117.40" y="48.94" width="2.61" height="0.96" fill="#3a3a3a"/><rect x="120.53" y="48.94" width="3.25" height="0.96" fill="#3a3a3a"/></g></g><rect x="110.3" y="56" width="27.7" height="5.3" rx="1.6" fill="#e8e8e8"/><g opacity="0.6"><g opacity="0.68"><rect x="112.10" y="58.29" width="4.29" height="0.96" fill="#3a3a3a"/><rect x="116.91" y="58.29" width="2.09" height="0.96" fill="#3a3a3a"/><rect x="119.51" y="58.29" width="1.93" height="0.96" fill="#3a3a3a"/><rect x="121.96" y="58.29" width="3.63" height="0.96" fill="#3a3a3a"/><rect x="126.12" y="58.29" width="2.60" height="0.96" fill="#3a3a3a"/></g></g><line x1="53.6" y1="22.7" x2="53.6" y2="72.7" stroke="#555" stroke-width="0.3" stroke-dasharray="0.8,0.8"/><line x1="101.2" y1="22.7" x2="101.2" y2="72.7" stroke="#555" stroke-width="0.3" stroke-dasharray="0.8,0.8"/><g opacity="0.68"><rect x="110.00" y="67.10" width="3.43" height="1.06" fill="#d0d0d0"/><rect x="114.01" y="67.10" width="2.76" height="1.06" fill="#d0d0d0"/><rect x="117.33" y="67.10" width="4.31" height="1.06" fill="#d0d0d0"/><rect x="122.22" y="67.10" width="1.88" height="1.06" fill="#d0d0d0"/><rect x="124.67" y="67.10" width="3.08" height="1.06" fill="#d0d0d0"/><rect x="128.32" y="67.10" width="3.73" height="1.06" fill="#d0d0d0"/><rect x="132.62" y="67.10" width="3.38" height="1.06" fill="#d0d0d0"/></g><g opacity="0.68"><rect x="7.50" y="75.71" width="3.88" height="0.91" fill="#9a9a9a"/><rect x="11.87" y="75.71" width="1.63" height="0.91" fill="#9a9a9a"/></g><rect x="137" y="75.3" width="1.4" height="1.8" fill="#9a9a9a" /></svg></div>
<div class="pn" style="left:592.7px;top:397px">7</div>
<div class="th" style="left:754.2px;top:297px"><svg width="146" height="82" viewBox="0 0 146 82" font-family="Liberation Sans, sans-serif"><defs><filter id="bl7" x="-5%" y="-5%" width="110%" height="110%"><feGaussianBlur stdDeviation="1.5"/></filter></defs><rect x="0" y="0" width="146" height="82" fill="#2c2c2c" /><rect x="7.8" y="0" width="21.9" height="21.9" fill="#3b3b3b" /><text x="15.3" y="15.6" font-size="7.4" font-weight="bold" fill="#ececec" stroke="#ececec" stroke-width="0.26" textLength="53.5" lengthAdjust="spacingAndGlyphs">COMPREHENSION</text><g opacity="0.85"><rect x="15.30" y="27.74" width="3.97" height="1.33" fill="#d6d6d6"/><rect x="19.86" y="27.74" width="2.93" height="1.33" fill="#d6d6d6"/><rect x="23.39" y="27.74" width="2.98" height="1.33" fill="#d6d6d6"/><rect x="26.97" y="27.74" width="6.06" height="1.33" fill="#d6d6d6"/><rect x="33.63" y="27.74" width="4.96" height="1.33" fill="#d6d6d6"/></g><g opacity="0.68"><rect x="15.30" y="33.84" width="1.40" height="0.96" fill="#bdbdbd"/></g><g opacity="0.68"><rect x="18.40" y="33.84" width="1.75" height="0.96" fill="#bdbdbd"/><rect x="20.67" y="33.84" width="3.54" height="0.96" fill="#bdbdbd"/><rect x="24.72" y="33.84" width="4.20" height="0.96" fill="#bdbdbd"/><rect x="29.44" y="33.84" width="3.24" height="0.96" fill="#bdbdbd"/><rect x="33.20" y="33.84" width="2.63" height="0.96" fill="#bdbdbd"/><rect x="36.35" y="33.84" width="1.05" height="0.96" fill="#bdbdbd"/></g><rect x="18.4" y="38.5" width="28.6" height="0.35" fill="#8a8a8a" /><g opacity="0.68"><rect x="15.30" y="40.94" width="1.40" height="0.96" fill="#bdbdbd"/></g><g opacity="0.68"><rect x="18.40" y="40.94" width="2.52" height="0.96" fill="#bdbdbd"/><rect x="21.44" y="40.94" width="1.79" height="0.96" fill="#bdbdbd"/><rect x="23.75" y="40.94" width="2.93" height="0.96" fill="#bdbdbd"/><rect x="27.21" y="40.94" width="3.24" height="0.96" fill="#bdbdbd"/><rect x="30.97" y="40.94" width="4.23" height="0.96" fill="#bdbdbd"/><rect x="35.72" y="40.94" width="2.41" height="0.96" fill="#bdbdbd"/></g><rect x="18.4" y="45.599999999999994" width="28.6" height="0.35" fill="#8a8a8a" /><g opacity="0.68"><rect x="15.30" y="47.94" width="1.40" height="0.96" fill="#bdbdbd"/></g><g opacity="0.68"><rect x="18.40" y="47.94" width="4.44" height="0.96" fill="#bdbdbd"/><rect x="23.36" y="47.94" width="3.56" height="0.96" fill="#bdbdbd"/><rect x="27.44" y="47.94" width="2.44" height="0.96" fill="#bdbdbd"/><rect x="30.39" y="47.94" width="5.30" height="0.96" fill="#bdbdbd"/></g><rect x="18.4" y="52.599999999999994" width="28.6" height="0.35" fill="#8a8a8a" /><g opacity="0.68"><rect x="15.30" y="55.24" width="1.40" height="0.96" fill="#bdbdbd"/></g><g opacity="0.68"><rect x="18.40" y="55.24" width="4.74" height="0.96" fill="#bdbdbd"/><rect x="23.66" y="55.24" width="2.53" height="0.96" fill="#bdbdbd"/><rect x="26.71" y="55.24" width="2.50" height="0.96" fill="#bdbdbd"/><rect x="29.73" y="55.24" width="4.52" height="0.96" fill="#bdbdbd"/><rect x="34.77" y="55.24" width="2.77" height="0.96" fill="#bdbdbd"/><rect x="38.06" y="55.24" width="0.34" height="0.96" fill="#bdbdbd"/></g><rect x="18.4" y="59.9" width="28.6" height="0.35" fill="#8a8a8a" /><g opacity="0.68"><rect x="15.30" y="62.14" width="1.40" height="0.96" fill="#bdbdbd"/></g><g opacity="0.68"><rect x="18.40" y="62.14" width="2.37" height="0.96" fill="#bdbdbd"/><rect x="21.29" y="62.14" width="2.50" height="0.96" fill="#bdbdbd"/><rect x="24.31" y="62.14" width="3.23" height="0.96" fill="#bdbdbd"/><rect x="28.06" y="62.14" width="4.16" height="0.96" fill="#bdbdbd"/><rect x="32.75" y="62.14" width="5.22" height="0.96" fill="#bdbdbd"/><rect x="38.49" y="62.14" width="2.22" height="0.96" fill="#bdbdbd"/><rect x="41.23" y="62.14" width="3.14" height="0.96" fill="#bdbdbd"/><rect x="44.89" y="62.14" width="0.51" height="0.96" fill="#bdbdbd"/></g><rect x="18.4" y="66.8" width="28.6" height="0.35" fill="#8a8a8a" /><clipPath id="cp4"><rect x="94.4" y="11.3" width="40.2" height="59.1"/></clipPath><g clip-path="url(#cp4)"><g filter="url(#bl7)"><rect x="94.4" y="11.3" width="40.2" height="59.1" fill="#0b0e12" /><rect x="94.4" y="11.3" width="40.2" height="11" fill="#050505" /><ellipse cx="118.5" cy="36" rx="7" ry="10" fill="#161a20"/><ellipse cx="118.8" cy="37" rx="2.6" ry="3.6" fill="#6a7088"/><ellipse cx="118" cy="48" rx="9" ry="6" fill="#14161a"/><polygon points="94.4,62 106,56 120,55 134.6,58 134.6,70.4 94.4,70.4" fill="#1e3038"/></g></g><rect x="86.2" y="11.3" width="17.3" height="31.7" fill="#3d3d3d" /><g opacity="0.68"><rect x="7.50" y="75.71" width="5.05" height="0.91" fill="#9a9a9a"/><rect x="13.05" y="75.71" width="0.45" height="0.91" fill="#9a9a9a"/></g><rect x="137" y="75.3" width="1.4" height="1.8" fill="#9a9a9a" /></svg></div>
<div class="pn" style="left:807.2px;top:397px">8</div>
<div class="th" style="left:110.7px;top:440px"><svg width="146" height="82" viewBox="0 0 146 82" font-family="Liberation Sans, sans-serif"><defs><filter id="bl8" x="-5%" y="-5%" width="110%" height="110%"><feGaussianBlur stdDeviation="1.5"/></filter></defs><rect x="0" y="0" width="146" height="82" fill="#2c2c2c" /><rect x="7.5" y="0" width="21.9" height="21.9" fill="#3b3b3b" /><text x="15" y="15.6" font-size="7.4" font-weight="bold" fill="#ececec" stroke="#ececec" stroke-width="0.26" textLength="36.7" lengthAdjust="spacingAndGlyphs">DISCUSSION</text><g opacity="0.68"><rect x="85.60" y="10.30" width="2.05" height="1.06" fill="#d0d0d0"/><rect x="88.22" y="10.30" width="2.08" height="1.06" fill="#d0d0d0"/><rect x="90.87" y="10.30" width="3.46" height="1.06" fill="#d0d0d0"/><rect x="94.90" y="10.30" width="5.54" height="1.06" fill="#d0d0d0"/><rect x="101.01" y="10.30" width="5.48" height="1.06" fill="#d0d0d0"/><rect x="107.06" y="10.30" width="4.86" height="1.06" fill="#d0d0d0"/><rect x="112.49" y="10.30" width="5.95" height="1.06" fill="#d0d0d0"/><rect x="119.01" y="10.30" width="5.68" height="1.06" fill="#d0d0d0"/><rect x="125.26" y="10.30" width="3.19" height="1.06" fill="#d0d0d0"/><rect x="129.02" y="10.30" width="2.60" height="1.06" fill="#d0d0d0"/><rect x="132.19" y="10.30" width="5.41" height="1.06" fill="#d0d0d0"/></g><g opacity="0.68"><rect x="85.60" y="14.20" width="4.91" height="1.06" fill="#d0d0d0"/><rect x="91.08" y="14.20" width="1.96" height="1.06" fill="#d0d0d0"/><rect x="93.62" y="14.20" width="4.57" height="1.06" fill="#d0d0d0"/><rect x="98.77" y="14.20" width="3.40" height="1.06" fill="#d0d0d0"/><rect x="102.73" y="14.20" width="3.38" height="1.06" fill="#d0d0d0"/><rect x="106.68" y="14.20" width="3.20" height="1.06" fill="#d0d0d0"/><rect x="110.46" y="14.20" width="2.53" height="1.06" fill="#d0d0d0"/><rect x="113.56" y="14.20" width="1.85" height="1.06" fill="#d0d0d0"/><rect x="115.98" y="14.20" width="2.99" height="1.06" fill="#d0d0d0"/><rect x="119.54" y="14.20" width="3.28" height="1.06" fill="#d0d0d0"/><rect x="123.39" y="14.20" width="5.77" height="1.06" fill="#d0d0d0"/><rect x="129.74" y="14.20" width="2.34" height="1.06" fill="#d0d0d0"/><rect x="132.65" y="14.20" width="5.81" height="1.06" fill="#d0d0d0"/></g><g opacity="0.85"><rect x="18.60" y="34.37" width="2.93" height="1.39" fill="#e0e0e0"/><rect x="22.16" y="34.37" width="3.60" height="1.39" fill="#e0e0e0"/><rect x="26.39" y="34.37" width="5.70" height="1.39" fill="#e0e0e0"/><rect x="32.71" y="34.37" width="5.70" height="1.39" fill="#e0e0e0"/></g><g opacity="0.85"><rect x="62.30" y="34.37" width="3.95" height="1.39" fill="#e0e0e0"/><rect x="66.87" y="34.37" width="2.22" height="1.39" fill="#e0e0e0"/><rect x="69.72" y="34.37" width="4.13" height="1.39" fill="#e0e0e0"/><rect x="74.47" y="34.37" width="3.68" height="1.39" fill="#e0e0e0"/><rect x="78.77" y="34.37" width="3.53" height="1.39" fill="#e0e0e0"/></g><g opacity="0.85"><rect x="106.00" y="34.37" width="2.87" height="1.39" fill="#e0e0e0"/><rect x="109.49" y="34.37" width="3.64" height="1.39" fill="#e0e0e0"/><rect x="113.76" y="34.37" width="6.04" height="1.39" fill="#e0e0e0"/><rect x="120.42" y="34.37" width="2.14" height="1.39" fill="#e0e0e0"/><rect x="123.18" y="34.37" width="2.82" height="1.39" fill="#e0e0e0"/></g><rect x="12.5" y="41" width="31.7" height="11.3" rx="1.6" fill="#e8e8e8"/><g opacity="0.6"><g opacity="0.68"><rect x="14.30" y="43.69" width="4.71" height="0.96" fill="#3a3a3a"/><rect x="19.53" y="43.69" width="4.54" height="0.96" fill="#3a3a3a"/><rect x="24.59" y="43.69" width="1.82" height="0.96" fill="#3a3a3a"/><rect x="26.93" y="43.69" width="1.80" height="0.96" fill="#3a3a3a"/><rect x="29.25" y="43.69" width="1.90" height="0.96" fill="#3a3a3a"/><rect x="31.67" y="43.69" width="5.12" height="0.96" fill="#3a3a3a"/><rect x="37.31" y="43.69" width="1.99" height="0.96" fill="#3a3a3a"/></g></g><g opacity="0.6"><g opacity="0.68"><rect x="14.30" y="46.29" width="4.47" height="0.96" fill="#3a3a3a"/><rect x="19.29" y="46.29" width="5.04" height="0.96" fill="#3a3a3a"/><rect x="24.85" y="46.29" width="2.94" height="0.96" fill="#3a3a3a"/><rect x="28.30" y="46.29" width="2.69" height="0.96" fill="#3a3a3a"/><rect x="31.51" y="46.29" width="5.26" height="0.96" fill="#3a3a3a"/><rect x="37.29" y="46.29" width="3.01" height="0.96" fill="#3a3a3a"/></g></g><g opacity="0.6"><g opacity="0.68"><rect x="14.30" y="48.89" width="2.65" height="0.96" fill="#3a3a3a"/><rect x="17.47" y="48.89" width="4.35" height="0.96" fill="#3a3a3a"/><rect x="22.34" y="48.89" width="2.85" height="0.96" fill="#3a3a3a"/><rect x="25.72" y="48.89" width="2.58" height="0.96" fill="#3a3a3a"/></g></g><rect x="56.25" y="41" width="31.35" height="14" rx="1.6" fill="#e8e8e8"/><g opacity="0.6"><g opacity="0.68"><rect x="58.05" y="43.74" width="1.68" height="0.96" fill="#3a3a3a"/><rect x="60.25" y="43.74" width="4.50" height="0.96" fill="#3a3a3a"/><rect x="65.27" y="43.74" width="5.10" height="0.96" fill="#3a3a3a"/><rect x="70.89" y="43.74" width="4.04" height="0.96" fill="#3a3a3a"/><rect x="75.46" y="43.74" width="5.20" height="0.96" fill="#3a3a3a"/><rect x="81.18" y="43.74" width="0.87" height="0.96" fill="#3a3a3a"/></g></g><g opacity="0.6"><g opacity="0.68"><rect x="58.05" y="46.34" width="2.54" height="0.96" fill="#3a3a3a"/><rect x="61.11" y="46.34" width="3.45" height="0.96" fill="#3a3a3a"/><rect x="65.08" y="46.34" width="5.25" height="0.96" fill="#3a3a3a"/><rect x="70.86" y="46.34" width="5.24" height="0.96" fill="#3a3a3a"/><rect x="76.62" y="46.34" width="3.12" height="0.96" fill="#3a3a3a"/><rect x="80.26" y="46.34" width="2.61" height="0.96" fill="#3a3a3a"/></g></g><g opacity="0.6"><g opacity="0.68"><rect x="58.05" y="48.94" width="3.28" height="0.96" fill="#3a3a3a"/><rect x="61.85" y="48.94" width="3.52" height="0.96" fill="#3a3a3a"/><rect x="65.89" y="48.94" width="5.15" height="0.96" fill="#3a3a3a"/><rect x="71.55" y="48.94" width="2.35" height="0.96" fill="#3a3a3a"/><rect x="74.43" y="48.94" width="1.62" height="0.96" fill="#3a3a3a"/></g></g><g opacity="0.6"><g opacity="0.68"><rect x="58.05" y="51.54" width="4.44" height="0.96" fill="#3a3a3a"/><rect x="63.01" y="51.54" width="1.04" height="0.96" fill="#3a3a3a"/></g></g><rect x="100" y="41" width="31.7" height="11.3" rx="1.6" fill="#e8e8e8"/><g opacity="0.6"><g opacity="0.68"><rect x="101.80" y="43.69" width="4.56" height="0.96" fill="#3a3a3a"/><rect x="106.88" y="43.69" width="3.94" height="0.96" fill="#3a3a3a"/><rect x="111.35" y="43.69" width="2.90" height="0.96" fill="#3a3a3a"/><rect x="114.76" y="43.69" width="2.86" height="0.96" fill="#3a3a3a"/><rect x="118.15" y="43.69" width="3.02" height="0.96" fill="#3a3a3a"/><rect x="121.69" y="43.69" width="4.60" height="0.96" fill="#3a3a3a"/></g></g><g opacity="0.6"><g opacity="0.68"><rect x="101.80" y="46.29" width="1.96" height="0.96" fill="#3a3a3a"/><rect x="104.28" y="46.29" width="2.41" height="0.96" fill="#3a3a3a"/><rect x="107.21" y="46.29" width="4.49" height="0.96" fill="#3a3a3a"/><rect x="112.22" y="46.29" width="2.59" height="0.96" fill="#3a3a3a"/><rect x="115.33" y="46.29" width="1.91" height="0.96" fill="#3a3a3a"/><rect x="117.76" y="46.29" width="1.79" height="0.96" fill="#3a3a3a"/><rect x="120.08" y="46.29" width="3.74" height="0.96" fill="#3a3a3a"/><rect x="124.34" y="46.29" width="2.89" height="0.96" fill="#3a3a3a"/></g></g><g opacity="0.6"><g opacity="0.68"><rect x="101.80" y="48.89" width="5.34" height="0.96" fill="#3a3a3a"/><rect x="107.66" y="48.89" width="4.98" height="0.96" fill="#3a3a3a"/><rect x="113.16" y="48.89" width="5.37" height="0.96" fill="#3a3a3a"/><rect x="119.05" y="48.89" width="0.75" height="0.96" fill="#3a3a3a"/></g></g><g opacity="0.68"><rect x="7.50" y="75.71" width="1.88" height="0.91" fill="#9a9a9a"/><rect x="9.88" y="75.71" width="1.93" height="0.91" fill="#9a9a9a"/><rect x="12.30" y="75.71" width="1.20" height="0.91" fill="#9a9a9a"/></g><rect x="137" y="75.3" width="1.4" height="1.8" fill="#9a9a9a" /></svg></div>
<div class="pn" style="left:163.7px;top:540px">9</div>
<div class="th" style="left:325.2px;top:440px"><svg width="146" height="82" viewBox="0 0 146 82" font-family="Liberation Sans, sans-serif"><defs><filter id="bl9" x="-5%" y="-5%" width="110%" height="110%"><feGaussianBlur stdDeviation="1.5"/></filter></defs><rect x="0" y="0" width="146" height="82" fill="#2c2c2c" /><rect x="7.8" y="0" width="22.7" height="26.6" fill="#3b3b3b" /><text x="15.3" y="15.6" font-size="7.4" font-weight="bold" fill="#ececec" stroke="#ececec" stroke-width="0.26" textLength="24.5" lengthAdjust="spacingAndGlyphs">YOUR</text><text x="15.3" y="21.9" font-size="7.4" font-weight="bold" fill="#ececec" stroke="#ececec" stroke-width="0.26" textLength="24.5" lengthAdjust="spacingAndGlyphs">ENDING</text><g opacity="0.68"><rect x="15.30" y="31.90" width="4.76" height="1.06" fill="#c8c8c8"/><rect x="20.63" y="31.90" width="3.68" height="1.06" fill="#c8c8c8"/><rect x="24.88" y="31.90" width="2.80" height="1.06" fill="#c8c8c8"/><rect x="28.25" y="31.90" width="3.55" height="1.06" fill="#c8c8c8"/><rect x="32.38" y="31.90" width="4.39" height="1.06" fill="#c8c8c8"/><rect x="37.34" y="31.90" width="4.61" height="1.06" fill="#c8c8c8"/><rect x="42.53" y="31.90" width="4.92" height="1.06" fill="#c8c8c8"/><rect x="48.02" y="31.90" width="5.33" height="1.06" fill="#c8c8c8"/><rect x="53.92" y="31.90" width="2.38" height="1.06" fill="#c8c8c8"/></g><g opacity="0.68"><rect x="15.30" y="35.70" width="2.33" height="1.06" fill="#c8c8c8"/><rect x="18.21" y="35.70" width="5.30" height="1.06" fill="#c8c8c8"/><rect x="24.08" y="35.70" width="3.05" height="1.06" fill="#c8c8c8"/><rect x="27.70" y="35.70" width="4.17" height="1.06" fill="#c8c8c8"/><rect x="32.44" y="35.70" width="3.37" height="1.06" fill="#c8c8c8"/><rect x="36.38" y="35.70" width="4.88" height="1.06" fill="#c8c8c8"/><rect x="41.83" y="35.70" width="2.65" height="1.06" fill="#c8c8c8"/><rect x="45.06" y="35.70" width="2.85" height="1.06" fill="#c8c8c8"/><rect x="48.49" y="35.70" width="2.85" height="1.06" fill="#c8c8c8"/><rect x="51.90" y="35.70" width="2.47" height="1.06" fill="#c8c8c8"/><rect x="54.94" y="35.70" width="0.36" height="1.06" fill="#c8c8c8"/></g><g opacity="0.68"><rect x="15.30" y="39.40" width="4.22" height="1.06" fill="#c8c8c8"/><rect x="20.09" y="39.40" width="3.18" height="1.06" fill="#c8c8c8"/><rect x="23.84" y="39.40" width="3.47" height="1.06" fill="#c8c8c8"/><rect x="27.88" y="39.40" width="5.93" height="1.06" fill="#c8c8c8"/><rect x="34.38" y="39.40" width="3.93" height="1.06" fill="#c8c8c8"/><rect x="38.88" y="39.40" width="2.79" height="1.06" fill="#c8c8c8"/><rect x="42.24" y="39.40" width="5.17" height="1.06" fill="#c8c8c8"/><rect x="47.98" y="39.40" width="4.53" height="1.06" fill="#c8c8c8"/><rect x="53.08" y="39.40" width="3.22" height="1.06" fill="#c8c8c8"/></g><g opacity="0.68"><rect x="15.30" y="43.10" width="2.26" height="1.06" fill="#c8c8c8"/><rect x="18.13" y="43.10" width="3.79" height="1.06" fill="#c8c8c8"/><rect x="22.49" y="43.10" width="5.21" height="1.06" fill="#c8c8c8"/><rect x="28.28" y="43.10" width="5.30" height="1.06" fill="#c8c8c8"/><rect x="34.15" y="43.10" width="5.61" height="1.06" fill="#c8c8c8"/><rect x="40.33" y="43.10" width="2.00" height="1.06" fill="#c8c8c8"/><rect x="42.90" y="43.10" width="3.04" height="1.06" fill="#c8c8c8"/><rect x="46.51" y="43.10" width="2.33" height="1.06" fill="#c8c8c8"/><rect x="49.41" y="43.10" width="2.62" height="1.06" fill="#c8c8c8"/></g><rect x="15.3" y="51.6" width="41.3" height="14.8" rx="1.8" fill="#ebebeb"/><rect x="66.4" y="12" width="68.8" height="57.5" fill="#0e1417" /><defs><pattern id="kp9" width="3.1" height="3.1" patternUnits="userSpaceOnUse" patternTransform="rotate(-20.5)"><rect width="3.1" height="3.1" fill="#2c5070"/><rect x="0.45" y="0.45" width="2.2" height="2.2" rx="0.5" fill="#5088b4"/></pattern></defs><clipPath id="cp5"><rect x="66.4" y="12" width="68.8" height="57.5"/></clipPath><g clip-path="url(#cp5)"><g filter="url(#bl9)"></g><polygon points="74.3,42.2 136,19.2 136,48.5 81.1,67.8" fill="url(#kp9)"/><polygon points="74.3,42.2 136,19.2 136,21 75,44" fill="#6a98c0" opacity="0.5"/><rect x="91" y="17" width="14" height="8.5" rx="3" fill="#4e86b4" transform="rotate(-20.5 98 21)"/></g><g opacity="0.68"><rect x="7.50" y="75.71" width="5.05" height="0.91" fill="#9a9a9a"/><rect x="13.04" y="75.71" width="0.46" height="0.91" fill="#9a9a9a"/></g><rect x="137" y="75.3" width="1.4" height="1.8" fill="#9a9a9a" /></svg></div>
<div class="pn" style="left:378.2px;top:540px">10</div>
<div class="th" style="left:539.7px;top:440px"><svg width="146" height="82" viewBox="0 0 146 82" font-family="Liberation Sans, sans-serif"><defs><filter id="bl10" x="-5%" y="-5%" width="110%" height="110%"><feGaussianBlur stdDeviation="1.5"/></filter></defs><rect x="0" y="0" width="146" height="82" fill="#2c2c2c" /><rect x="8.3" y="0" width="21.4" height="21.9" fill="#3b3b3b" /><text x="15.3" y="15.6" font-size="7.4" font-weight="bold" fill="#ececec" stroke="#ececec" stroke-width="0.26" textLength="31" lengthAdjust="spacingAndGlyphs">SPEAKING</text><g opacity="0.68"><rect x="91.60" y="10.30" width="5.67" height="1.06" fill="#d0d0d0"/><rect x="97.84" y="10.30" width="3.37" height="1.06" fill="#d0d0d0"/><rect x="101.78" y="10.30" width="5.41" height="1.06" fill="#d0d0d0"/><rect x="107.76" y="10.30" width="3.69" height="1.06" fill="#d0d0d0"/><rect x="112.02" y="10.30" width="2.91" height="1.06" fill="#d0d0d0"/><rect x="115.50" y="10.30" width="5.04" height="1.06" fill="#d0d0d0"/><rect x="121.11" y="10.30" width="5.73" height="1.06" fill="#d0d0d0"/><rect x="127.42" y="10.30" width="2.27" height="1.06" fill="#d0d0d0"/><rect x="130.26" y="10.30" width="4.29" height="1.06" fill="#d0d0d0"/><rect x="135.12" y="10.30" width="2.48" height="1.06" fill="#d0d0d0"/></g><g opacity="0.68"><rect x="91.60" y="14.20" width="2.73" height="1.06" fill="#d0d0d0"/><rect x="94.90" y="14.20" width="3.35" height="1.06" fill="#d0d0d0"/><rect x="98.83" y="14.20" width="2.42" height="1.06" fill="#d0d0d0"/><rect x="101.82" y="14.20" width="2.67" height="1.06" fill="#d0d0d0"/><rect x="105.06" y="14.20" width="2.88" height="1.06" fill="#d0d0d0"/><rect x="108.52" y="14.20" width="4.31" height="1.06" fill="#d0d0d0"/><rect x="113.40" y="14.20" width="4.52" height="1.06" fill="#d0d0d0"/><rect x="118.49" y="14.20" width="2.67" height="1.06" fill="#d0d0d0"/><rect x="121.74" y="14.20" width="1.88" height="1.06" fill="#d0d0d0"/><rect x="124.19" y="14.20" width="3.18" height="1.06" fill="#d0d0d0"/><rect x="127.94" y="14.20" width="4.63" height="1.06" fill="#d0d0d0"/><rect x="133.15" y="14.20" width="2.60" height="1.06" fill="#d0d0d0"/><rect x="136.32" y="14.20" width="1.68" height="1.06" fill="#d0d0d0"/></g><clipPath id="cp6"><rect x="7.7" y="30.5" width="23.3" height="29.4"/><rect x="34.4" y="30.5" width="23.3" height="29.4"/><rect x="61.4" y="30.5" width="23.3" height="29.4"/><rect x="88.4" y="30.5" width="23.3" height="29.4"/><rect x="115.5" y="30.5" width="23.3" height="29.4"/></clipPath><g clip-path="url(#cp6)"><g filter="url(#bl10)"><rect x="7.7" y="30.5" width="23.3" height="29.4" fill="#222e38" /><rect x="7.7" y="30.5" width="9" height="20" fill="#52647a" /><rect x="16.7" y="30.5" width="3.5" height="29.4" fill="#161e26" /><polygon points="20.2,36 31.0,33 31.0,57 21.7,59" fill="#6a7a8c"/><rect x="7.7" y="52" width="14" height="8" fill="#141a20" /><rect x="34.4" y="30.5" width="23.3" height="29.4" fill="#2e3a46" /><rect x="38.4" y="33" width="15" height="14" fill="#080a0e" /><rect x="34.4" y="47" width="23.3" height="13" fill="#2c3844" /><rect x="36.4" y="47" width="19" height="3" fill="#4a5a66" /><rect x="61.4" y="30.5" width="23.3" height="29.4" fill="#26303a" /><ellipse cx="69.9" cy="33" rx="3" ry="1.5" fill="#b08850"/><rect x="78.4" y="34" width="6.3" height="26" fill="#52626e" /><rect x="64.4" y="37" width="12" height="20" fill="#34424e" /><rect x="69.4" y="39" width="5" height="19" fill="#10141a" /><circle cx="71.9" cy="40" r="1.5" fill="#a07040"/><rect x="88.4" y="30.5" width="23.3" height="29.4" fill="#22323e" /><rect x="94.9" y="35" width="9" height="13" fill="#aac0d0" /><rect x="88.4" y="52" width="23.3" height="8" fill="#485a66" /><rect x="115.5" y="30.5" width="23.3" height="29.4" fill="#121a22" /><rect x="126.5" y="37" width="4.5" height="16" fill="#8aa0b4" /><rect x="131.0" y="33" width="7.8" height="25" fill="#3a4a58" /><rect x="121.5" y="52" width="17" height="8" fill="#2a3846" /></g></g><g opacity="0.68"><rect x="13.35" y="64.17" width="2.55" height="1.01" fill="#d0d0d0"/><rect x="16.45" y="64.17" width="4.88" height="1.01" fill="#d0d0d0"/><rect x="21.87" y="64.17" width="3.48" height="1.01" fill="#d0d0d0"/></g><g opacity="0.68"><rect x="15.35" y="67.67" width="2.00" height="1.01" fill="#d0d0d0"/><rect x="17.90" y="67.67" width="2.15" height="1.01" fill="#d0d0d0"/><rect x="20.59" y="67.67" width="2.76" height="1.01" fill="#d0d0d0"/></g><g opacity="0.68"><rect x="40.55" y="64.17" width="3.92" height="1.01" fill="#d0d0d0"/><rect x="45.01" y="64.17" width="4.27" height="1.01" fill="#d0d0d0"/><rect x="49.82" y="64.17" width="1.73" height="1.01" fill="#d0d0d0"/></g><g opacity="0.68"><rect x="42.05" y="67.67" width="2.39" height="1.01" fill="#d0d0d0"/><rect x="44.99" y="67.67" width="4.49" height="1.01" fill="#d0d0d0"/></g><g opacity="0.68"><rect x="66.55" y="64.17" width="3.36" height="1.01" fill="#d0d0d0"/><rect x="70.46" y="64.17" width="2.87" height="1.01" fill="#d0d0d0"/><rect x="73.87" y="64.17" width="2.96" height="1.01" fill="#d0d0d0"/><rect x="77.38" y="64.17" width="2.17" height="1.01" fill="#d0d0d0"/></g><g opacity="0.68"><rect x="67.05" y="67.67" width="2.98" height="1.01" fill="#d0d0d0"/><rect x="70.58" y="67.67" width="3.98" height="1.01" fill="#d0d0d0"/><rect x="75.10" y="67.67" width="3.16" height="1.01" fill="#d0d0d0"/></g><g opacity="0.68"><rect x="93.55" y="64.17" width="3.39" height="1.01" fill="#d0d0d0"/><rect x="97.49" y="64.17" width="5.15" height="1.01" fill="#d0d0d0"/><rect x="103.18" y="64.17" width="3.37" height="1.01" fill="#d0d0d0"/></g><g opacity="0.68"><rect x="95.05" y="67.67" width="3.18" height="1.01" fill="#d0d0d0"/><rect x="98.78" y="67.67" width="2.53" height="1.01" fill="#d0d0d0"/><rect x="101.85" y="67.67" width="3.20" height="1.01" fill="#d0d0d0"/></g><g opacity="0.68"><rect x="121.65" y="64.17" width="2.55" height="1.01" fill="#d0d0d0"/><rect x="124.75" y="64.17" width="1.77" height="1.01" fill="#d0d0d0"/><rect x="127.07" y="64.17" width="5.30" height="1.01" fill="#d0d0d0"/></g><g opacity="0.68"><rect x="123.15" y="67.67" width="3.42" height="1.01" fill="#d0d0d0"/><rect x="127.11" y="67.67" width="4.04" height="1.01" fill="#d0d0d0"/></g><g opacity="0.68"><rect x="7.50" y="75.71" width="3.03" height="0.91" fill="#9a9a9a"/><rect x="11.02" y="75.71" width="2.48" height="0.91" fill="#9a9a9a"/></g><rect x="137" y="75.3" width="1.4" height="1.8" fill="#9a9a9a" /></svg></div>
<div class="pn" style="left:592.7px;top:540px">11</div>
<div class="th" style="left:754.2px;top:440px"><svg width="146" height="82" viewBox="0 0 146 82" font-family="Liberation Sans, sans-serif"><defs><filter id="bl11" x="-5%" y="-5%" width="110%" height="110%"><feGaussianBlur stdDeviation="1.5"/></filter></defs><rect x="0" y="0" width="146" height="82" fill="#2c2c2c" /><clipPath id="cp7"><rect x="7.8" y="7.3" width="52.4" height="63.6"/></clipPath><g clip-path="url(#cp7)"><g filter="url(#bl11)"><rect x="7.8" y="7.3" width="52.4" height="63.6" fill="#1c2630" /><polygon points="7.8,7.3 60.2,7.3 60.2,25 36,21 11,12 7.8,12" fill="#0c141c"/><polygon points="36.6,21 60.2,25 60.2,56 36.6,52" fill="#2a3642"/><polygon points="11.5,11.9 22.9,13.8 22.9,50.8 11.5,50.8" fill="#8aa0b8"/><polygon points="24.3,15.2 36.6,17.4 36.6,49.9 24.3,50.2" fill="#8096ae"/><rect x="7.8" y="7.3" width="3.6" height="63.6" fill="#0e161e" /><polygon points="7.8,51 60.2,53 60.2,64 7.8,64" fill="#1e2832"/><polygon points="28,57 60.2,55 60.2,63 32,64" fill="#3e4a58"/><rect x="7.8" y="64" width="52.4" height="7" fill="#0c1218" /></g></g><rect x="70.5" y="0" width="21.8" height="21.9" fill="#3b3b3b" /><text x="76.25" y="16" font-size="7.4" font-weight="bold" fill="#ececec" stroke="#ececec" stroke-width="0.26" textLength="34.75" lengthAdjust="spacingAndGlyphs">QUESTIONS</text><g opacity="0.85"><rect x="70.50" y="27.14" width="3.90" height="1.33" fill="#d6d6d6"/><rect x="75.00" y="27.14" width="2.62" height="1.33" fill="#d6d6d6"/><rect x="78.22" y="27.14" width="1.98" height="1.33" fill="#d6d6d6"/><rect x="80.80" y="27.14" width="4.30" height="1.33" fill="#d6d6d6"/><rect x="85.69" y="27.14" width="4.68" height="1.33" fill="#d6d6d6"/><rect x="90.97" y="27.14" width="5.84" height="1.33" fill="#d6d6d6"/><rect x="97.41" y="27.14" width="2.30" height="1.33" fill="#d6d6d6"/><rect x="100.30" y="27.14" width="4.60" height="1.33" fill="#d6d6d6"/><rect x="105.50" y="27.14" width="3.52" height="1.33" fill="#d6d6d6"/><rect x="109.62" y="27.14" width="4.09" height="1.33" fill="#d6d6d6"/><rect x="114.31" y="27.14" width="2.55" height="1.33" fill="#d6d6d6"/><rect x="117.45" y="27.14" width="1.05" height="1.33" fill="#d6d6d6"/></g><g opacity="0.68"><rect x="71.00" y="33.14" width="1.30" height="0.96" fill="#bdbdbd"/></g><g opacity="0.68"><rect x="74.40" y="33.14" width="5.14" height="0.96" fill="#bdbdbd"/><rect x="80.06" y="33.14" width="2.07" height="0.96" fill="#bdbdbd"/><rect x="82.65" y="33.14" width="3.51" height="0.96" fill="#bdbdbd"/><rect x="86.68" y="33.14" width="4.68" height="0.96" fill="#bdbdbd"/><rect x="91.88" y="33.14" width="5.29" height="0.96" fill="#bdbdbd"/><rect x="97.70" y="33.14" width="2.41" height="0.96" fill="#bdbdbd"/><rect x="100.62" y="33.14" width="2.14" height="0.96" fill="#bdbdbd"/><rect x="103.28" y="33.14" width="5.20" height="0.96" fill="#bdbdbd"/><rect x="109.01" y="33.14" width="1.39" height="0.96" fill="#bdbdbd"/></g><rect x="77.6" y="37.7" width="47.9" height="0.35" fill="#8a8a8a" /><g opacity="0.68"><rect x="71.00" y="39.84" width="1.30" height="0.96" fill="#bdbdbd"/></g><g opacity="0.68"><rect x="74.40" y="39.84" width="1.87" height="0.96" fill="#bdbdbd"/><rect x="76.79" y="39.84" width="5.14" height="0.96" fill="#bdbdbd"/><rect x="82.45" y="39.84" width="3.12" height="0.96" fill="#bdbdbd"/><rect x="86.09" y="39.84" width="5.06" height="0.96" fill="#bdbdbd"/><rect x="91.67" y="39.84" width="3.99" height="0.96" fill="#bdbdbd"/><rect x="96.18" y="39.84" width="4.76" height="0.96" fill="#bdbdbd"/><rect x="101.46" y="39.84" width="2.27" height="0.96" fill="#bdbdbd"/><rect x="104.24" y="39.84" width="4.61" height="0.96" fill="#bdbdbd"/><rect x="109.38" y="39.84" width="2.50" height="0.96" fill="#bdbdbd"/><rect x="112.40" y="39.84" width="3.18" height="0.96" fill="#bdbdbd"/><rect x="116.10" y="39.84" width="2.30" height="0.96" fill="#bdbdbd"/></g><rect x="77.6" y="44.400000000000006" width="47.9" height="0.35" fill="#8a8a8a" /><g opacity="0.68"><rect x="71.00" y="46.44" width="1.30" height="0.96" fill="#bdbdbd"/></g><g opacity="0.68"><rect x="74.40" y="46.44" width="2.35" height="0.96" fill="#bdbdbd"/><rect x="77.27" y="46.44" width="2.48" height="0.96" fill="#bdbdbd"/><rect x="80.28" y="46.44" width="3.17" height="0.96" fill="#bdbdbd"/><rect x="83.96" y="46.44" width="3.61" height="0.96" fill="#bdbdbd"/><rect x="88.09" y="46.44" width="3.11" height="0.96" fill="#bdbdbd"/><rect x="91.72" y="46.44" width="2.13" height="0.96" fill="#bdbdbd"/><rect x="94.37" y="46.44" width="2.59" height="0.96" fill="#bdbdbd"/><rect x="97.48" y="46.44" width="4.38" height="0.96" fill="#bdbdbd"/><rect x="102.38" y="46.44" width="5.03" height="0.96" fill="#bdbdbd"/><rect x="107.93" y="46.44" width="1.82" height="0.96" fill="#bdbdbd"/><rect x="110.28" y="46.44" width="3.78" height="0.96" fill="#bdbdbd"/><rect x="114.57" y="46.44" width="4.51" height="0.96" fill="#bdbdbd"/><rect x="119.60" y="46.44" width="1.81" height="0.96" fill="#bdbdbd"/><rect x="121.93" y="46.44" width="1.47" height="0.96" fill="#bdbdbd"/></g><rect x="77.6" y="51.0" width="47.9" height="0.35" fill="#8a8a8a" /><g opacity="0.68"><rect x="71.00" y="52.84" width="1.30" height="0.96" fill="#bdbdbd"/></g><g opacity="0.68"><rect x="74.40" y="52.84" width="3.91" height="0.96" fill="#bdbdbd"/><rect x="78.83" y="52.84" width="3.73" height="0.96" fill="#bdbdbd"/><rect x="83.08" y="52.84" width="4.02" height="0.96" fill="#bdbdbd"/><rect x="87.62" y="52.84" width="2.81" height="0.96" fill="#bdbdbd"/><rect x="90.96" y="52.84" width="3.24" height="0.96" fill="#bdbdbd"/><rect x="94.72" y="52.84" width="3.85" height="0.96" fill="#bdbdbd"/><rect x="99.09" y="52.84" width="3.26" height="0.96" fill="#bdbdbd"/><rect x="102.87" y="52.84" width="4.14" height="0.96" fill="#bdbdbd"/><rect x="107.53" y="52.84" width="3.34" height="0.96" fill="#bdbdbd"/><rect x="111.39" y="52.84" width="3.31" height="0.96" fill="#bdbdbd"/><rect x="115.22" y="52.84" width="1.18" height="0.96" fill="#bdbdbd"/></g><rect x="77.6" y="57.400000000000006" width="47.9" height="0.35" fill="#8a8a8a" /><g opacity="0.68"><rect x="71.00" y="59.24" width="1.30" height="0.96" fill="#bdbdbd"/></g><g opacity="0.68"><rect x="74.40" y="59.24" width="3.50" height="0.96" fill="#bdbdbd"/><rect x="78.42" y="59.24" width="2.55" height="0.96" fill="#bdbdbd"/><rect x="81.49" y="59.24" width="4.53" height="0.96" fill="#bdbdbd"/><rect x="86.54" y="59.24" width="4.59" height="0.96" fill="#bdbdbd"/><rect x="91.65" y="59.24" width="3.39" height="0.96" fill="#bdbdbd"/><rect x="95.56" y="59.24" width="2.34" height="0.96" fill="#bdbdbd"/><rect x="98.42" y="59.24" width="3.44" height="0.96" fill="#bdbdbd"/><rect x="102.38" y="59.24" width="2.07" height="0.96" fill="#bdbdbd"/><rect x="104.97" y="59.24" width="2.15" height="0.96" fill="#bdbdbd"/><rect x="107.64" y="59.24" width="3.28" height="0.96" fill="#bdbdbd"/><rect x="111.44" y="59.24" width="2.01" height="0.96" fill="#bdbdbd"/><rect x="113.97" y="59.24" width="3.32" height="0.96" fill="#bdbdbd"/><rect x="117.81" y="59.24" width="3.58" height="0.96" fill="#bdbdbd"/><rect x="121.91" y="59.24" width="1.82" height="0.96" fill="#bdbdbd"/><rect x="124.25" y="59.24" width="1.15" height="0.96" fill="#bdbdbd"/></g><rect x="77.6" y="63.800000000000004" width="47.9" height="0.35" fill="#8a8a8a" /><g opacity="0.68"><rect x="71.00" y="65.84" width="1.30" height="0.96" fill="#bdbdbd"/></g><g opacity="0.68"><rect x="74.40" y="65.84" width="4.42" height="0.96" fill="#bdbdbd"/><rect x="79.34" y="65.84" width="4.58" height="0.96" fill="#bdbdbd"/><rect x="84.44" y="65.84" width="3.58" height="0.96" fill="#bdbdbd"/><rect x="88.54" y="65.84" width="1.87" height="0.96" fill="#bdbdbd"/><rect x="90.93" y="65.84" width="3.56" height="0.96" fill="#bdbdbd"/><rect x="95.01" y="65.84" width="3.08" height="0.96" fill="#bdbdbd"/><rect x="98.61" y="65.84" width="5.23" height="0.96" fill="#bdbdbd"/><rect x="104.37" y="65.84" width="2.18" height="0.96" fill="#bdbdbd"/><rect x="107.06" y="65.84" width="4.88" height="0.96" fill="#bdbdbd"/><rect x="112.47" y="65.84" width="5.40" height="0.96" fill="#bdbdbd"/><rect x="118.39" y="65.84" width="4.41" height="0.96" fill="#bdbdbd"/></g><rect x="77.6" y="70.4" width="47.9" height="0.35" fill="#8a8a8a" /><g opacity="0.68"><rect x="7.50" y="75.71" width="4.49" height="0.91" fill="#9a9a9a"/><rect x="12.48" y="75.71" width="1.02" height="0.91" fill="#9a9a9a"/></g><rect x="137" y="75.3" width="1.4" height="1.8" fill="#9a9a9a" /></svg></div>
<div class="pn" style="left:807.2px;top:540px">12</div>
<div class="th" style="left:110.7px;top:583px"><svg width="146" height="82" viewBox="0 0 146 82" font-family="Liberation Sans, sans-serif"><defs><filter id="bl12" x="-5%" y="-5%" width="110%" height="110%"><feGaussianBlur stdDeviation="1.5"/></filter></defs><rect x="0" y="0" width="146" height="82" fill="#2c2c2c" /><rect x="7.5" y="0" width="21.9" height="21.9" fill="#3b3b3b" /><text x="15" y="15.6" font-size="7.4" font-weight="bold" fill="#ececec" stroke="#ececec" stroke-width="0.26" textLength="26.6" lengthAdjust="spacingAndGlyphs">PRACTICE</text><g opacity="0.85"><rect x="80.00" y="12.44" width="6.15" height="1.33" fill="#d6d6d6"/><rect x="86.75" y="12.44" width="4.04" height="1.33" fill="#d6d6d6"/><rect x="91.38" y="12.44" width="6.04" height="1.33" fill="#d6d6d6"/><rect x="98.02" y="12.44" width="5.87" height="1.33" fill="#d6d6d6"/><rect x="104.49" y="12.44" width="2.63" height="1.33" fill="#d6d6d6"/><rect x="107.72" y="12.44" width="5.32" height="1.33" fill="#d6d6d6"/><rect x="113.63" y="12.44" width="5.93" height="1.33" fill="#d6d6d6"/><rect x="120.16" y="12.44" width="2.20" height="1.33" fill="#d6d6d6"/><rect x="122.96" y="12.44" width="3.43" height="1.33" fill="#d6d6d6"/><rect x="126.98" y="12.44" width="5.18" height="1.33" fill="#d6d6d6"/><rect x="132.76" y="12.44" width="2.04" height="1.33" fill="#d6d6d6"/></g><g opacity="0.68"><rect x="15.00" y="26.44" width="5.03" height="0.96" fill="#bdbdbd"/><rect x="20.55" y="26.44" width="2.70" height="0.96" fill="#bdbdbd"/><rect x="23.77" y="26.44" width="4.73" height="0.96" fill="#bdbdbd"/><rect x="29.01" y="26.44" width="2.21" height="0.96" fill="#bdbdbd"/><rect x="31.74" y="26.44" width="3.55" height="0.96" fill="#bdbdbd"/><rect x="35.81" y="26.44" width="4.19" height="0.96" fill="#bdbdbd"/></g><g opacity="0.68"><rect x="80.00" y="26.44" width="2.45" height="0.96" fill="#bdbdbd"/><rect x="82.97" y="26.44" width="2.65" height="0.96" fill="#bdbdbd"/><rect x="86.14" y="26.44" width="3.56" height="0.96" fill="#bdbdbd"/><rect x="90.22" y="26.44" width="2.86" height="0.96" fill="#bdbdbd"/><rect x="93.61" y="26.44" width="1.80" height="0.96" fill="#bdbdbd"/><rect x="95.93" y="26.44" width="2.35" height="0.96" fill="#bdbdbd"/><rect x="98.80" y="26.44" width="2.27" height="0.96" fill="#bdbdbd"/><rect x="101.59" y="26.44" width="5.18" height="0.96" fill="#bdbdbd"/><rect x="107.29" y="26.44" width="4.22" height="0.96" fill="#bdbdbd"/><rect x="112.03" y="26.44" width="0.97" height="0.96" fill="#bdbdbd"/></g><g opacity="0.68"><rect x="15.00" y="31.14" width="2.30" height="0.96" fill="#bdbdbd"/><rect x="17.82" y="31.14" width="4.61" height="0.96" fill="#bdbdbd"/><rect x="22.95" y="31.14" width="2.10" height="0.96" fill="#bdbdbd"/><rect x="25.57" y="31.14" width="3.66" height="0.96" fill="#bdbdbd"/><rect x="29.74" y="31.14" width="4.05" height="0.96" fill="#bdbdbd"/><rect x="34.32" y="31.14" width="2.68" height="0.96" fill="#bdbdbd"/></g><g opacity="0.68"><rect x="80.00" y="31.14" width="4.94" height="0.96" fill="#bdbdbd"/><rect x="85.46" y="31.14" width="3.75" height="0.96" fill="#bdbdbd"/><rect x="89.73" y="31.14" width="3.84" height="0.96" fill="#bdbdbd"/><rect x="94.09" y="31.14" width="4.98" height="0.96" fill="#bdbdbd"/><rect x="99.59" y="31.14" width="2.06" height="0.96" fill="#bdbdbd"/><rect x="102.17" y="31.14" width="5.39" height="0.96" fill="#bdbdbd"/><rect x="108.08" y="31.14" width="4.03" height="0.96" fill="#bdbdbd"/><rect x="112.62" y="31.14" width="3.15" height="0.96" fill="#bdbdbd"/></g><g opacity="0.68"><rect x="15.00" y="35.84" width="4.66" height="0.96" fill="#bdbdbd"/><rect x="20.18" y="35.84" width="2.66" height="0.96" fill="#bdbdbd"/><rect x="23.36" y="35.84" width="5.38" height="0.96" fill="#bdbdbd"/><rect x="29.26" y="35.84" width="3.83" height="0.96" fill="#bdbdbd"/><rect x="33.61" y="35.84" width="3.02" height="0.96" fill="#bdbdbd"/><rect x="37.15" y="35.84" width="4.53" height="0.96" fill="#bdbdbd"/><rect x="42.20" y="35.84" width="3.33" height="0.96" fill="#bdbdbd"/><rect x="46.05" y="35.84" width="0.95" height="0.96" fill="#bdbdbd"/></g><g opacity="0.68"><rect x="80.00" y="35.84" width="4.46" height="0.96" fill="#bdbdbd"/><rect x="84.98" y="35.84" width="1.85" height="0.96" fill="#bdbdbd"/><rect x="87.34" y="35.84" width="4.74" height="0.96" fill="#bdbdbd"/><rect x="92.60" y="35.84" width="2.62" height="0.96" fill="#bdbdbd"/><rect x="95.74" y="35.84" width="4.06" height="0.96" fill="#bdbdbd"/><rect x="100.33" y="35.84" width="5.36" height="0.96" fill="#bdbdbd"/><rect x="106.20" y="35.84" width="3.86" height="0.96" fill="#bdbdbd"/><rect x="110.59" y="35.84" width="1.41" height="0.96" fill="#bdbdbd"/></g><g opacity="0.68"><rect x="15.00" y="40.54" width="2.84" height="0.96" fill="#bdbdbd"/><rect x="18.36" y="40.54" width="1.67" height="0.96" fill="#bdbdbd"/><rect x="20.55" y="40.54" width="1.79" height="0.96" fill="#bdbdbd"/><rect x="22.87" y="40.54" width="2.23" height="0.96" fill="#bdbdbd"/><rect x="25.61" y="40.54" width="3.98" height="0.96" fill="#bdbdbd"/><rect x="30.11" y="40.54" width="3.29" height="0.96" fill="#bdbdbd"/><rect x="33.92" y="40.54" width="3.59" height="0.96" fill="#bdbdbd"/><rect x="38.03" y="40.54" width="2.97" height="0.96" fill="#bdbdbd"/></g><g opacity="0.68"><rect x="80.00" y="40.54" width="2.16" height="0.96" fill="#bdbdbd"/><rect x="82.68" y="40.54" width="2.52" height="0.96" fill="#bdbdbd"/><rect x="85.72" y="40.54" width="4.12" height="0.96" fill="#bdbdbd"/><rect x="90.36" y="40.54" width="1.75" height="0.96" fill="#bdbdbd"/><rect x="92.63" y="40.54" width="1.68" height="0.96" fill="#bdbdbd"/><rect x="94.82" y="40.54" width="3.00" height="0.96" fill="#bdbdbd"/><rect x="98.34" y="40.54" width="2.07" height="0.96" fill="#bdbdbd"/><rect x="100.93" y="40.54" width="3.01" height="0.96" fill="#bdbdbd"/><rect x="104.45" y="40.54" width="2.51" height="0.96" fill="#bdbdbd"/><rect x="107.48" y="40.54" width="3.86" height="0.96" fill="#bdbdbd"/><rect x="111.86" y="40.54" width="2.14" height="0.96" fill="#bdbdbd"/></g><g opacity="0.68"><rect x="15.00" y="45.24" width="2.43" height="0.96" fill="#bdbdbd"/><rect x="17.95" y="45.24" width="4.01" height="0.96" fill="#bdbdbd"/><rect x="22.48" y="45.24" width="3.45" height="0.96" fill="#bdbdbd"/><rect x="26.45" y="45.24" width="2.17" height="0.96" fill="#bdbdbd"/><rect x="29.14" y="45.24" width="5.18" height="0.96" fill="#bdbdbd"/><rect x="34.84" y="45.24" width="2.58" height="0.96" fill="#bdbdbd"/><rect x="37.94" y="45.24" width="2.23" height="0.96" fill="#bdbdbd"/><rect x="40.68" y="45.24" width="2.03" height="0.96" fill="#bdbdbd"/></g><g opacity="0.68"><rect x="80.00" y="45.24" width="4.06" height="0.96" fill="#bdbdbd"/><rect x="84.58" y="45.24" width="4.93" height="0.96" fill="#bdbdbd"/><rect x="90.03" y="45.24" width="4.60" height="0.96" fill="#bdbdbd"/><rect x="95.15" y="45.24" width="3.17" height="0.96" fill="#bdbdbd"/><rect x="98.85" y="45.24" width="2.66" height="0.96" fill="#bdbdbd"/><rect x="102.03" y="45.24" width="1.71" height="0.96" fill="#bdbdbd"/><rect x="104.26" y="45.24" width="0.74" height="0.96" fill="#bdbdbd"/></g><g opacity="0.68"><rect x="15.00" y="49.94" width="3.78" height="0.96" fill="#bdbdbd"/><rect x="19.30" y="49.94" width="2.98" height="0.96" fill="#bdbdbd"/><rect x="22.80" y="49.94" width="4.09" height="0.96" fill="#bdbdbd"/><rect x="27.40" y="49.94" width="3.33" height="0.96" fill="#bdbdbd"/><rect x="31.25" y="49.94" width="5.18" height="0.96" fill="#bdbdbd"/></g><g opacity="0.68"><rect x="80.00" y="49.94" width="4.42" height="0.96" fill="#bdbdbd"/><rect x="84.94" y="49.94" width="2.60" height="0.96" fill="#bdbdbd"/><rect x="88.06" y="49.94" width="5.05" height="0.96" fill="#bdbdbd"/><rect x="93.63" y="49.94" width="1.83" height="0.96" fill="#bdbdbd"/><rect x="95.98" y="49.94" width="3.66" height="0.96" fill="#bdbdbd"/><rect x="100.16" y="49.94" width="3.19" height="0.96" fill="#bdbdbd"/><rect x="103.87" y="49.94" width="2.13" height="0.96" fill="#bdbdbd"/></g><g opacity="0.68"><rect x="15.00" y="54.64" width="1.89" height="0.96" fill="#bdbdbd"/><rect x="17.41" y="54.64" width="4.59" height="0.96" fill="#bdbdbd"/><rect x="22.51" y="54.64" width="1.71" height="0.96" fill="#bdbdbd"/><rect x="24.75" y="54.64" width="3.73" height="0.96" fill="#bdbdbd"/><rect x="29.00" y="54.64" width="5.20" height="0.96" fill="#bdbdbd"/><rect x="34.71" y="54.64" width="2.20" height="0.96" fill="#bdbdbd"/><rect x="37.43" y="54.64" width="2.41" height="0.96" fill="#bdbdbd"/><rect x="40.37" y="54.64" width="3.95" height="0.96" fill="#bdbdbd"/><rect x="44.84" y="54.64" width="3.57" height="0.96" fill="#bdbdbd"/><rect x="48.92" y="54.64" width="2.08" height="0.96" fill="#bdbdbd"/></g><g opacity="0.68"><rect x="80.00" y="54.64" width="4.72" height="0.96" fill="#bdbdbd"/><rect x="85.24" y="54.64" width="2.32" height="0.96" fill="#bdbdbd"/><rect x="88.08" y="54.64" width="2.83" height="0.96" fill="#bdbdbd"/><rect x="91.43" y="54.64" width="2.79" height="0.96" fill="#bdbdbd"/><rect x="94.74" y="54.64" width="1.85" height="0.96" fill="#bdbdbd"/><rect x="97.11" y="54.64" width="5.00" height="0.96" fill="#bdbdbd"/><rect x="102.63" y="54.64" width="4.60" height="0.96" fill="#bdbdbd"/><rect x="107.75" y="54.64" width="4.35" height="0.96" fill="#bdbdbd"/><rect x="112.62" y="54.64" width="1.69" height="0.96" fill="#bdbdbd"/><rect x="114.83" y="54.64" width="3.17" height="0.96" fill="#bdbdbd"/></g><g opacity="0.68"><rect x="15.00" y="59.34" width="4.46" height="0.96" fill="#bdbdbd"/><rect x="19.98" y="59.34" width="3.41" height="0.96" fill="#bdbdbd"/><rect x="23.91" y="59.34" width="4.45" height="0.96" fill="#bdbdbd"/><rect x="28.88" y="59.34" width="3.36" height="0.96" fill="#bdbdbd"/><rect x="32.76" y="59.34" width="2.51" height="0.96" fill="#bdbdbd"/><rect x="35.80" y="59.34" width="2.06" height="0.96" fill="#bdbdbd"/><rect x="38.38" y="59.34" width="2.54" height="0.96" fill="#bdbdbd"/><rect x="41.44" y="59.34" width="1.81" height="0.96" fill="#bdbdbd"/><rect x="43.77" y="59.34" width="1.23" height="0.96" fill="#bdbdbd"/></g><g opacity="0.68"><rect x="80.00" y="59.34" width="4.48" height="0.96" fill="#bdbdbd"/><rect x="85.00" y="59.34" width="4.27" height="0.96" fill="#bdbdbd"/><rect x="89.79" y="59.34" width="4.84" height="0.96" fill="#bdbdbd"/><rect x="95.15" y="59.34" width="4.34" height="0.96" fill="#bdbdbd"/><rect x="100.00" y="59.34" width="2.66" height="0.96" fill="#bdbdbd"/><rect x="103.19" y="59.34" width="3.74" height="0.96" fill="#bdbdbd"/><rect x="107.45" y="59.34" width="2.55" height="0.96" fill="#bdbdbd"/></g><g opacity="0.68"><rect x="15.00" y="64.04" width="4.62" height="0.96" fill="#bdbdbd"/><rect x="20.14" y="64.04" width="3.63" height="0.96" fill="#bdbdbd"/><rect x="24.29" y="64.04" width="2.66" height="0.96" fill="#bdbdbd"/><rect x="27.47" y="64.04" width="4.07" height="0.96" fill="#bdbdbd"/><rect x="32.07" y="64.04" width="5.29" height="0.96" fill="#bdbdbd"/><rect x="37.87" y="64.04" width="2.48" height="0.96" fill="#bdbdbd"/><rect x="40.87" y="64.04" width="4.97" height="0.96" fill="#bdbdbd"/><rect x="46.36" y="64.04" width="0.64" height="0.96" fill="#bdbdbd"/></g><g opacity="0.68"><rect x="80.00" y="64.04" width="2.64" height="0.96" fill="#bdbdbd"/><rect x="83.16" y="64.04" width="2.55" height="0.96" fill="#bdbdbd"/><rect x="86.24" y="64.04" width="4.46" height="0.96" fill="#bdbdbd"/><rect x="91.21" y="64.04" width="5.21" height="0.96" fill="#bdbdbd"/><rect x="96.94" y="64.04" width="4.46" height="0.96" fill="#bdbdbd"/><rect x="101.93" y="64.04" width="2.89" height="0.96" fill="#bdbdbd"/><rect x="105.34" y="64.04" width="4.97" height="0.96" fill="#bdbdbd"/></g><g opacity="0.68"><rect x="15.00" y="68.74" width="2.90" height="0.96" fill="#bdbdbd"/><rect x="18.42" y="68.74" width="2.56" height="0.96" fill="#bdbdbd"/><rect x="21.50" y="68.74" width="5.07" height="0.96" fill="#bdbdbd"/><rect x="27.09" y="68.74" width="4.03" height="0.96" fill="#bdbdbd"/><rect x="31.64" y="68.74" width="4.26" height="0.96" fill="#bdbdbd"/><rect x="36.43" y="68.74" width="4.16" height="0.96" fill="#bdbdbd"/><rect x="41.11" y="68.74" width="5.34" height="0.96" fill="#bdbdbd"/><rect x="46.97" y="68.74" width="3.43" height="0.96" fill="#bdbdbd"/><rect x="50.92" y="68.74" width="2.08" height="0.96" fill="#bdbdbd"/></g><g opacity="0.68"><rect x="80.00" y="68.74" width="4.28" height="0.96" fill="#bdbdbd"/><rect x="84.80" y="68.74" width="4.88" height="0.96" fill="#bdbdbd"/><rect x="90.21" y="68.74" width="3.31" height="0.96" fill="#bdbdbd"/><rect x="94.03" y="68.74" width="4.38" height="0.96" fill="#bdbdbd"/><rect x="98.94" y="68.74" width="3.81" height="0.96" fill="#bdbdbd"/><rect x="103.26" y="68.74" width="2.82" height="0.96" fill="#bdbdbd"/><rect x="106.60" y="68.74" width="2.40" height="0.96" fill="#bdbdbd"/></g><g opacity="0.68"><rect x="7.50" y="75.71" width="3.80" height="0.91" fill="#9a9a9a"/><rect x="11.80" y="75.71" width="1.70" height="0.91" fill="#9a9a9a"/></g><rect x="137" y="75.3" width="1.4" height="1.8" fill="#9a9a9a" /></svg></div>
<div class="pn" style="left:163.7px;top:683px">13</div>
<div class="th" style="left:325.2px;top:583px"><svg width="146" height="82" viewBox="0 0 146 82" font-family="Liberation Sans, sans-serif"><defs><filter id="bl13" x="-5%" y="-5%" width="110%" height="110%"><feGaussianBlur stdDeviation="1.5"/></filter></defs><rect x="0" y="0" width="146" height="82" fill="#2c2c2c" /><rect x="7.8" y="0" width="21.4" height="21.9" fill="#3b3b3b" /><text x="15.3" y="15.6" font-size="7.4" font-weight="bold" fill="#ececec" stroke="#ececec" stroke-width="0.26" textLength="27.4" lengthAdjust="spacingAndGlyphs">PICTURES</text><g opacity="0.68"><rect x="88.30" y="10.30" width="5.59" height="1.06" fill="#d0d0d0"/><rect x="94.46" y="10.30" width="2.43" height="1.06" fill="#d0d0d0"/><rect x="97.46" y="10.30" width="1.94" height="1.06" fill="#d0d0d0"/><rect x="99.98" y="10.30" width="2.27" height="1.06" fill="#d0d0d0"/><rect x="102.83" y="10.30" width="5.67" height="1.06" fill="#d0d0d0"/><rect x="109.06" y="10.30" width="3.26" height="1.06" fill="#d0d0d0"/><rect x="112.89" y="10.30" width="2.42" height="1.06" fill="#d0d0d0"/><rect x="115.88" y="10.30" width="1.95" height="1.06" fill="#d0d0d0"/><rect x="118.41" y="10.30" width="2.01" height="1.06" fill="#d0d0d0"/><rect x="120.98" y="10.30" width="4.69" height="1.06" fill="#d0d0d0"/><rect x="126.24" y="10.30" width="4.45" height="1.06" fill="#d0d0d0"/><rect x="131.26" y="10.30" width="4.71" height="1.06" fill="#d0d0d0"/><rect x="136.55" y="10.30" width="2.05" height="1.06" fill="#d0d0d0"/></g><g opacity="0.68"><rect x="88.30" y="14.20" width="2.10" height="1.06" fill="#d0d0d0"/><rect x="90.98" y="14.20" width="4.27" height="1.06" fill="#d0d0d0"/><rect x="95.82" y="14.20" width="3.33" height="1.06" fill="#d0d0d0"/><rect x="99.72" y="14.20" width="5.21" height="1.06" fill="#d0d0d0"/><rect x="105.50" y="14.20" width="5.21" height="1.06" fill="#d0d0d0"/><rect x="111.29" y="14.20" width="5.51" height="1.06" fill="#d0d0d0"/><rect x="117.37" y="14.20" width="2.11" height="1.06" fill="#d0d0d0"/><rect x="120.05" y="14.20" width="5.41" height="1.06" fill="#d0d0d0"/><rect x="126.03" y="14.20" width="5.61" height="1.06" fill="#d0d0d0"/><rect x="132.21" y="14.20" width="5.73" height="1.06" fill="#d0d0d0"/></g><clipPath id="cp8"><rect x="7.3" y="29.2" width="41.9" height="38.8"/><rect x="52.3" y="29.2" width="41.45" height="38.8"/><rect x="96.9" y="29.2" width="41.4" height="38.8"/></clipPath><g clip-path="url(#cp8)"><g filter="url(#bl13)"><rect x="7.3" y="29.2" width="41.9" height="38.8" fill="#3e4c58" /><ellipse cx="28" cy="34" rx="15" ry="4.5" fill="#7a8894"/><rect x="7.3" y="38" width="6" height="22" fill="#5e6c78" /><rect x="43" y="38" width="6.2" height="22" fill="#52606c" /><rect x="18" y="39" width="21" height="17" fill="#2c3640" /><rect x="24.6" y="40.8" width="8.6" height="10.6" fill="#c4d0d8" /><rect x="27" y="48" width="3" height="9" fill="#20262c" /><rect x="7.3" y="57" width="41.9" height="11" fill="#4e5a64" /><ellipse cx="26" cy="64" rx="6" ry="2" fill="#2a3036"/><rect x="52.3" y="29.2" width="41.45" height="38.8" fill="#1c2630" /><rect x="52.3" y="29.2" width="8" height="38.8" fill="#34424e" /><rect x="86" y="29.2" width="7.75" height="38.8" fill="#34424e" /><rect x="63" y="29.2" width="4" height="34" fill="#2a3642" /><rect x="79" y="29.2" width="4" height="34" fill="#2a3642" /><rect x="68" y="40" width="10" height="18" fill="#141a20" /><rect x="70" y="46.8" width="6" height="8.5" fill="#6a3a2a" /><rect x="52.3" y="58" width="41.45" height="10" fill="#34424e" /><ellipse cx="73" cy="30.5" rx="2.5" ry="1" fill="#8a9ca8"/><rect x="96.9" y="29.2" width="41.4" height="38.8" fill="#0e1622" /><path d="M105.7,68 V42 A12.5,11 0 0 1 130.7,42 V68 Z" fill="#1c2a3a"/><path d="M107.5,68 V43 A10.7,9.5 0 0 1 128.9,43 V68 Z" fill="#4a6480"/><ellipse cx="118" cy="50" rx="5" ry="8" fill="#8aa2bc"/><rect x="117.4" y="33" width="1.4" height="35" fill="#1c2a3a" /><rect x="107.5" y="44" width="21.4" height="1.2" fill="#1c2a3a" /><rect x="111.5" y="40" width="1" height="28" fill="#243244" /><rect x="123.5" y="40" width="1" height="28" fill="#243244" /></g></g><text x="8.6" y="34.6" font-size="4" font-weight="bold" fill="#eeeeee">1</text><text x="53.6" y="34.6" font-size="4" font-weight="bold" fill="#eeeeee">2</text><text x="98.2" y="34.6" font-size="4" font-weight="bold" fill="#eeeeee">3</text><g opacity="0.68"><rect x="7.50" y="75.71" width="1.96" height="0.91" fill="#9a9a9a"/><rect x="9.96" y="75.71" width="2.32" height="0.91" fill="#9a9a9a"/><rect x="12.77" y="75.71" width="0.73" height="0.91" fill="#9a9a9a"/></g><rect x="137" y="75.3" width="1.4" height="1.8" fill="#9a9a9a" /></svg></div>
<div class="pn" style="left:378.2px;top:683px">14</div>
<div class="th" style="left:539.7px;top:583px"><svg width="146" height="82" viewBox="0 0 146 82" font-family="Liberation Sans, sans-serif"><defs><filter id="bl14" x="-5%" y="-5%" width="110%" height="110%"><feGaussianBlur stdDeviation="1.5"/></filter></defs><rect x="0" y="0" width="146" height="82" fill="#2c2c2c" /><rect x="8.3" y="7.8" width="17.7" height="32.8" fill="#3b3b3b" /><text x="11.9" y="18.4" font-size="6.8" font-weight="bold" fill="#ececec" stroke="#ececec" stroke-width="0.24" textLength="37.5" lengthAdjust="spacingAndGlyphs">HOMEWORK</text><g opacity="0.85"><rect x="66.90" y="15.30" width="2.24" height="1.45" fill="#e0e0e0"/><rect x="69.79" y="15.30" width="6.06" height="1.45" fill="#e0e0e0"/><rect x="76.50" y="15.30" width="5.89" height="1.45" fill="#e0e0e0"/></g><g opacity="0.68"><rect x="67.00" y="22.44" width="1.20" height="0.96" fill="#bdbdbd"/></g><g opacity="0.68"><rect x="69.50" y="22.44" width="4.76" height="0.96" fill="#bdbdbd"/><rect x="74.78" y="22.44" width="4.03" height="0.96" fill="#bdbdbd"/><rect x="79.34" y="22.44" width="2.74" height="0.96" fill="#bdbdbd"/><rect x="82.60" y="22.44" width="2.04" height="0.96" fill="#bdbdbd"/><rect x="85.16" y="22.44" width="2.03" height="0.96" fill="#bdbdbd"/><rect x="87.71" y="22.44" width="4.51" height="0.96" fill="#bdbdbd"/><rect x="92.74" y="22.44" width="2.44" height="0.96" fill="#bdbdbd"/><rect x="95.70" y="22.44" width="2.86" height="0.96" fill="#bdbdbd"/><rect x="99.08" y="22.44" width="3.26" height="0.96" fill="#bdbdbd"/><rect x="102.86" y="22.44" width="1.75" height="0.96" fill="#bdbdbd"/><rect x="105.12" y="22.44" width="2.63" height="0.96" fill="#bdbdbd"/><rect x="108.27" y="22.44" width="2.73" height="0.96" fill="#bdbdbd"/><rect x="111.52" y="22.44" width="4.35" height="0.96" fill="#bdbdbd"/><rect x="116.39" y="22.44" width="3.05" height="0.96" fill="#bdbdbd"/><rect x="119.95" y="22.44" width="2.87" height="0.96" fill="#bdbdbd"/><rect x="123.34" y="22.44" width="2.66" height="0.96" fill="#bdbdbd"/></g><g opacity="0.68"><rect x="67.00" y="26.34" width="1.20" height="0.96" fill="#bdbdbd"/></g><g opacity="0.68"><rect x="69.50" y="26.34" width="4.86" height="0.96" fill="#bdbdbd"/><rect x="74.88" y="26.34" width="3.99" height="0.96" fill="#bdbdbd"/><rect x="79.38" y="26.34" width="1.78" height="0.96" fill="#bdbdbd"/><rect x="81.69" y="26.34" width="3.22" height="0.96" fill="#bdbdbd"/><rect x="85.42" y="26.34" width="3.30" height="0.96" fill="#bdbdbd"/><rect x="89.25" y="26.34" width="4.57" height="0.96" fill="#bdbdbd"/><rect x="94.33" y="26.34" width="2.97" height="0.96" fill="#bdbdbd"/><rect x="97.82" y="26.34" width="4.31" height="0.96" fill="#bdbdbd"/><rect x="102.65" y="26.34" width="3.68" height="0.96" fill="#bdbdbd"/><rect x="106.85" y="26.34" width="1.15" height="0.96" fill="#bdbdbd"/></g><g opacity="0.68"><rect x="67.00" y="30.24" width="1.20" height="0.96" fill="#bdbdbd"/></g><g opacity="0.68"><rect x="69.50" y="30.24" width="2.01" height="0.96" fill="#bdbdbd"/><rect x="72.03" y="30.24" width="4.74" height="0.96" fill="#bdbdbd"/><rect x="77.29" y="30.24" width="2.31" height="0.96" fill="#bdbdbd"/><rect x="80.11" y="30.24" width="1.67" height="0.96" fill="#bdbdbd"/><rect x="82.31" y="30.24" width="2.42" height="0.96" fill="#bdbdbd"/><rect x="85.25" y="30.24" width="4.52" height="0.96" fill="#bdbdbd"/><rect x="90.29" y="30.24" width="5.33" height="0.96" fill="#bdbdbd"/><rect x="96.15" y="30.24" width="1.68" height="0.96" fill="#bdbdbd"/><rect x="98.35" y="30.24" width="3.51" height="0.96" fill="#bdbdbd"/><rect x="102.38" y="30.24" width="1.62" height="0.96" fill="#bdbdbd"/></g><clipPath id="cp9"><rect x="66.9" y="39.5" width="79.1" height="42.5"/></clipPath><g clip-path="url(#cp9)"><g filter="url(#bl14)"><rect x="66.9" y="39.5" width="79.1" height="42.5" fill="#16202e" /><rect x="66.9" y="39.5" width="23" height="26" fill="#3e5a78" /><rect x="77" y="39.5" width="4" height="28" fill="#6a8aac" /><rect x="66.9" y="39.5" width="5" height="10" fill="#6a7888" /><rect x="90" y="39.5" width="28" height="24" fill="#0a1020" /><rect x="118.4" y="43.4" width="11" height="18.6" fill="#5a80a8" /><rect x="121" y="44" width="5" height="5" fill="#8096ac" /><rect x="129.4" y="39.5" width="16.6" height="26" fill="#2e4a66" /><rect x="140" y="53" width="6" height="9" fill="#5a7a98" /><rect x="66.9" y="62.8" width="79.1" height="3.5" fill="#3a5670" /><rect x="66.9" y="66.3" width="79.1" height="15.7" fill="#101a28" /><ellipse cx="107" cy="80" rx="14" ry="10" fill="#34424e"/></g></g><g opacity="0.68"><rect x="7.50" y="75.71" width="4.42" height="0.91" fill="#9a9a9a"/><rect x="12.42" y="75.71" width="1.08" height="0.91" fill="#9a9a9a"/></g><rect x="137" y="75.3" width="1.4" height="1.8" fill="#9a9a9a" /></svg></div>
<div class="pn" style="left:592.7px;top:683px">15</div>
<div class="th" style="left:754.2px;top:583px"><svg width="146" height="82" viewBox="0 0 146 82" font-family="Liberation Sans, sans-serif"><defs><filter id="bl15" x="-5%" y="-5%" width="110%" height="110%"><feGaussianBlur stdDeviation="1.5"/></filter></defs><rect x="0" y="0" width="146" height="82" fill="#2c2c2c" /><rect x="7.8" y="7.8" width="48.6" height="48.9" fill="#3b3b3b" /><text x="42.7" y="33.3" font-size="10.5" font-weight="bold" fill="#ececec" stroke="#ececec" stroke-width="0.37" textLength="87" lengthAdjust="spacingAndGlyphs">ANY QUESTIONS?</text><g opacity="0.68"><rect x="7.50" y="75.71" width="3.35" height="0.91" fill="#9a9a9a"/><rect x="11.34" y="75.71" width="2.16" height="0.91" fill="#9a9a9a"/></g></svg></div>
<div class="pn" style="left:807.2px;top:683px">16</div>
<!--/THUMBS-->
<svg class="abs" style="left:512px;top:196px;z-index:10" width="16" height="20" viewBox="0 0 16 20"><path d="M3.6 2.6 L3.6 13.2 L6.2 10.9 L8.1 15.3 L9.9 14.5 L8.1 10.3 L11.6 10.3 Z" fill="#000" stroke="#e8e8e8" stroke-width="1.1" stroke-linejoin="round"/></svg>
</body></html>
